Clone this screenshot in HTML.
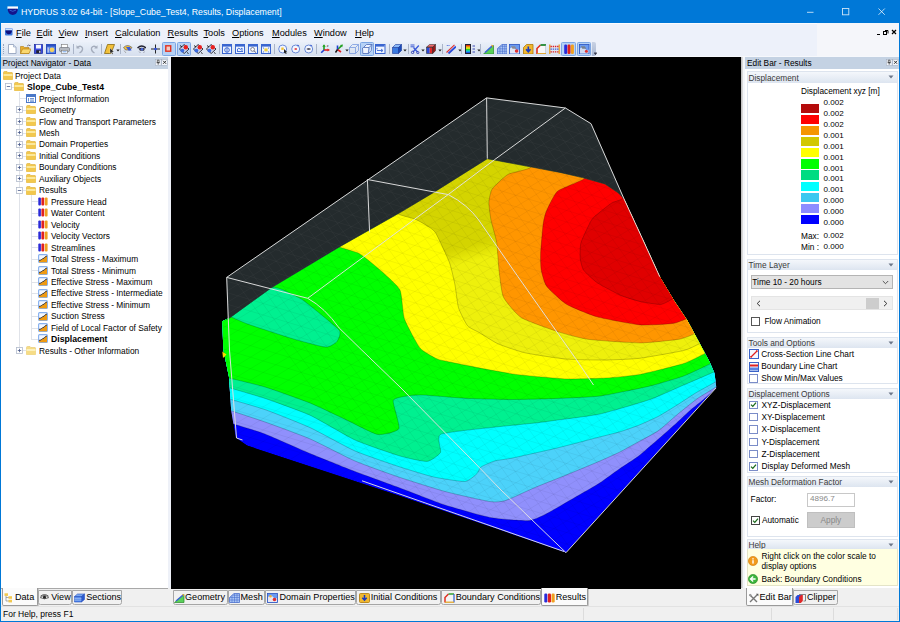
<!DOCTYPE html>
<html lang="en"><head><meta charset="utf-8"><title>HYDRUS 3.02 64-bit - [Slope_Cube_Test4, Results, Displacement]</title>
<style>

html,body{margin:0;padding:0}
body{width:900px;height:622px;position:relative;overflow:hidden;background:#f0f0f0;font-family:"Liberation Sans", sans-serif;font-size:9px;color:#000;}
div,span{box-sizing:border-box}
.abs{position:absolute}
.t{position:absolute;white-space:nowrap;line-height:12px;height:12px}
#title{left:0;top:0;width:900px;height:23px;background:#0078d7}
#menubar{left:1px;top:23px;width:898px;height:34px;background:#edf1fa;border-top:1px solid #fbfcff}
#toolbar{left:1px;top:41.5px;width:591px;height:14.5px;background:linear-gradient(#eaf0f9,#d6dfee)}
.mi{position:absolute;top:27px;font-size:9.2px;line-height:12px;white-space:nowrap;color:#000}
.mi u{text-decoration-thickness:1px;text-underline-offset:1px}
.hdr{position:absolute;height:11.5px;background:#c4d2e3;font-size:8.3px;line-height:12px;white-space:nowrap;color:#000}
  .tree{position:absolute;font-size:8.35px;line-height:12px;white-space:nowrap;height:12px}
.grp{position:absolute;left:747px;width:151px;height:12px;background:linear-gradient(#f4f7fb,#dde5f0);font-size:8.3px;color:#3a3a3a;white-space:nowrap;border:1px solid #dde4ee;border-bottom:none}
.rt{position:absolute;font-size:8.3px;line-height:12px;white-space:nowrap;height:12px}
.cb{position:absolute;width:9px;height:9px;background:#fff;border:1px solid #6a7da0}
.tab{position:absolute;font-size:9.1px;line-height:12px;white-space:nowrap;height:12px}

</style></head><body>
<div id="title" class="abs"></div>
<svg class="abs" style="left:6.5px;top:6px" width="11.5" height="9.8" viewBox="0 0 14 12"><rect x="0.5" y="0.5" width="13" height="3" fill="#fff"/><path d="M1 3.5 h12 v2 q-1 5 -6 5.5 q-5 -0.5 -6 -5.5z" fill="#14148c"/><path d="M3 5 q4 3 8 0" stroke="#3c6edc" stroke-width="1" fill="none"/></svg>
<div class="t" style="left:21px;top:6px;color:#fff;font-size:8.8px">HYDRUS 3.02 64-bit - [Slope_Cube_Test4, Results, Displacement]</div>
<svg class="abs" style="left:800px;top:0" width="100" height="23" viewBox="0 0 100 23"><g stroke="#fff" stroke-opacity="0.8" stroke-width="0.9" fill="none"><path d="M7 12.3h6.5"/><rect x="42.5" y="8.5" width="6.3" height="6.3"/><path d="M78.5 8.5l6.3 6.3m0 -6.3l-6.3 6.3"/></g></svg>
<div id="menubar" class="abs"></div>
<div class="abs" style="left:817px;top:23px;width:82px;height:34px;background:#f5f6fa"></div>
<svg class="abs" style="left:5px;top:28px" width="7.5" height="7.5" viewBox="0 0 11 10" preserveAspectRatio="none"><rect x="0" y="0" width="11" height="10" rx="1.5" fill="#3c78dc"/><rect x="0.5" y="0.5" width="10" height="2.5" fill="#cfe0fa"/><path d="M1 3.2h9v2q-1.5 3-4.5 3.2q-3-0.2-4.5-3.2z" fill="#10107c"/></svg>
<div class="mi" style="left:16px"><u>F</u>ile</div>
<div class="mi" style="left:36.5px"><u>E</u>dit</div>
<div class="mi" style="left:58.5px"><u>V</u>iew</div>
<div class="mi" style="left:85px"><u>I</u>nsert</div>
<div class="mi" style="left:115px"><u>C</u>alculation</div>
<div class="mi" style="left:167.5px"><u>R</u>esults</div>
<div class="mi" style="left:203.5px"><u>T</u>ools</div>
<div class="mi" style="left:232px"><u>O</u>ptions</div>
<div class="mi" style="left:272px"><u>M</u>odules</div>
<div class="mi" style="left:314px"><u>W</u>indow</div>
<div class="mi" style="left:355px"><u>H</u>elp</div>
<svg class="abs" style="left:876px;top:28px" width="22" height="8" viewBox="0 0 22 8"><path d="M1 6.5h3" stroke="#000" stroke-width="1"/><rect x="7.5" y="3.5" width="3" height="3" fill="none" stroke="#000" stroke-width="1"/><path d="M9 2.5h3v3" fill="none" stroke="#000" stroke-width="1"/><path d="M16 2l4 4m0-4l-4 4" stroke="#000" stroke-width="1.2"/></svg>
<div id="toolbar" class="abs"></div>
<div class="abs" style="left:3px;top:44px;width:1px;height:10px;border-left:1px dotted #98a4bc"></div>
<svg class="abs" style="left:8px;top:43.5px" width="8.5" height="10" viewBox="0 0 8.5 10"><path d="M0.5 0.5h5l2.5 2.5v6.5h-7.5z" fill="#fff" stroke="#8a9ab8" stroke-width="0.8"/><path d="M5.5 0.5v2.5h2.5" fill="#dde6f4" stroke="#8a9ab8" stroke-width="0.6"/></svg>
<svg class="abs" style="left:19.5px;top:43.5px" width="11.5" height="10" viewBox="0 0 11.5 10"><path d="M0.5 2.5h3l1 1h4.5v6h-8.5z" fill="#e8b030" stroke="#b07a10" stroke-width="0.6"/><path d="M0.5 9.5l2-4.5h8.5l-2 4.5z" fill="#fad870" stroke="#b07a10" stroke-width="0.6"/><path d="M7 2.2q1.5-2 3-0.5l0.8-0.8" stroke="#446" stroke-width="0.7" fill="none"/></svg>
<svg class="abs" style="left:34px;top:43.5px" width="9" height="10" viewBox="0 0 9 10"><rect x="0.4" y="0.5" width="8.2" height="9" fill="#3a4ae0" stroke="#1a2a9a" stroke-width="0.7"/><rect x="2" y="0.8" width="5" height="3.7" fill="#f4f6ff"/><rect x="2.2" y="6.2" width="4.6" height="3" fill="#223"/><rect x="5.2" y="6.8" width="1.2" height="2" fill="#eef"/></svg>
<svg class="abs" style="left:45.8px;top:43.5px" width="10" height="10" viewBox="0 0 10 10"><rect x="0.5" y="0.5" width="9" height="9" fill="#5a86e8" stroke="#2a4ec0" stroke-width="1"/><rect x="1" y="1" width="8" height="1.6" fill="#2a4ec0"/><circle cx="6" cy="5.8" r="2.4" fill="#f4d060"/><path d="M2.2 3.5v5" stroke="#dde" stroke-width="1"/></svg>
<svg class="abs" style="left:59px;top:43.5px" width="11" height="10" viewBox="0 0 11 10"><rect x="2.5" y="0.5" width="6" height="3.5" fill="#fff" stroke="#777" stroke-width="0.6"/><rect x="0.5" y="3.5" width="10" height="4" rx="1" fill="#b4b8c0" stroke="#6a6e78" stroke-width="0.6"/><rect x="2.5" y="6.3" width="6" height="3.2" fill="#fff" stroke="#777" stroke-width="0.6"/><path d="M3.5 7.8h4" stroke="#4a8ae0" stroke-width="0.8"/></svg>
<div class="abs" style="left:72.5px;top:44px;width:1px;height:10px;background:#aab4c8"></div>
<svg class="abs" style="left:76px;top:43.5px" width="8" height="10" viewBox="0 0 8 10"><path d="M1.5 3.5Q5 0.8 6.5 4Q7 7 3.5 9" fill="none" stroke="#a4acbc" stroke-width="1.3"/><path d="M0.5 1.2v3.3h3.3z" fill="#a4acbc"/></svg>
<svg class="abs" style="left:89.5px;top:43.5px" width="8" height="10" viewBox="0 0 8 10"><path d="M6.5 3.5Q3 0.8 1.5 4Q1 7 4.5 9" fill="none" stroke="#a4acbc" stroke-width="1.3"/><path d="M7.5 1.2v3.3h-3.3z" fill="#a4acbc"/></svg>
<div class="abs" style="left:101px;top:44px;width:1px;height:10px;background:#aab4c8"></div>
<svg class="abs" style="left:104px;top:43.5px" width="11" height="11" viewBox="0 0 11 11"><path d="M3.5 0.5h7l-3.5 9h-6.5z" fill="#f2c038" stroke="#8a6a10" stroke-width="0.8"/><path d="M6 4v5.5l1.3-1.2l1 2l0.9-0.4l-1-2h1.8z" fill="#222" stroke="#fff" stroke-width="0.3"/></svg>
<svg class="abs" style="left:116px;top:48.5px" width="4" height="3" viewBox="0 0 4 3"><path d="M0.3 0.5h3.4l-1.7 2z" fill="#222"/></svg>
<div class="abs" style="left:119.7px;top:44px;width:1px;height:10px;background:#aab4c8"></div>
<svg class="abs" style="left:123px;top:43.5px" width="9.5" height="10" viewBox="0 0 9.5 10"><path d="M0.5 3.5Q4.5 -0.5 9 3.5L7 6H2.5z" fill="#f0c040" stroke="#555" stroke-width="0.6"/><path d="M3 3h4l1.5 3.5h-3z" fill="#3a5ad8"/><path d="M1 6.5l2 2.5" stroke="#999" stroke-width="0.8"/></svg>
<svg class="abs" style="left:136.5px;top:43.5px" width="9.5" height="10" viewBox="0 0 9.5 10"><path d="M0.5 4Q4.7 0 9 4" fill="none" stroke="#223" stroke-width="1.4"/><path d="M1.5 4.5Q4.7 2.8 8 4.5L7 6.8H3z" fill="#334"/><circle cx="5" cy="5.2" r="1.3" fill="#4a6ae0"/><path d="M2 7.5l1.5 1.5M7.5 7.5l-1 1.5" stroke="#889" stroke-width="0.7"/></svg>
<svg class="abs" style="left:150.5px;top:43.5px" width="9" height="10" viewBox="0 0 9 10"><path d="M0 5h9M4.5 0.5v9" stroke="#111" stroke-width="0.9"/><circle cx="4.5" cy="5" r="1.3" fill="#2a4ae0"/></svg>
<div class="abs" style="left:161.5px;top:42px;width:14px;height:13.5px;background:#b6d2f6;border:1px solid #7ca6e4;border-radius:1.5px"></div>
<svg class="abs" style="left:165px;top:45.3px" width="6.5" height="7" viewBox="0 0 6.5 7"><rect x="0.8" y="0.8" width="4.9" height="5.4" fill="#f4c8c0" stroke="#e03020" stroke-width="1.4"/></svg>
<div class="abs" style="left:177px;top:42px;width:14px;height:13.5px;background:#b6d2f6;border:1px solid #7ca6e4;border-radius:1.5px"></div>
<svg class="abs" style="left:179px;top:43.5px" width="10.5" height="10" viewBox="0 0 10.5 10"><path d="M5.2 0.5l4.8 4.5l-4.8 4.5l-4.8-4.5z" fill="#c8d4ea" stroke="#223" stroke-width="0.9"/><circle cx="6.8" cy="3.3" r="2.2" fill="#e82020"/><circle cx="3.4" cy="6.6" r="1.9" fill="#3a6ae0"/><path d="M1 1.5l2 1.5M8 8.5l1.5 1" stroke="#111" stroke-width="0.9"/></svg>
<svg class="abs" style="left:192.5px;top:43.5px" width="10.5" height="10" viewBox="0 0 10.5 10"><path d="M5.2 0.5l4.8 4.5l-4.8 4.5l-4.8-4.5z" fill="#c8d4ea" stroke="#223" stroke-width="0.9"/><circle cx="6.8" cy="3.3" r="2.2" fill="#e82020"/><circle cx="3.4" cy="6.6" r="1.9" fill="#3a6ae0"/><path d="M1 1.5l2 1.5M8 8.5l1.5 1" stroke="#111" stroke-width="0.9"/></svg>
<svg class="abs" style="left:206px;top:43.5px" width="10.5" height="10" viewBox="0 0 10.5 10"><path d="M5.2 0.5l4.8 4.5l-4.8 4.5l-4.8-4.5z" fill="#c8d4ea" stroke="#223" stroke-width="0.9"/><circle cx="6.8" cy="3.3" r="2.2" fill="#e82020"/><circle cx="3.4" cy="6.6" r="1.9" fill="#3a6ae0"/><path d="M1 1.5l2 1.5M8 8.5l1.5 1" stroke="#111" stroke-width="0.9"/></svg>
<div class="abs" style="left:218.5px;top:44px;width:1px;height:10px;background:#aab4c8"></div>
<svg class="abs" style="left:221.7px;top:43.5px" width="10" height="10" viewBox="0 0 10 10"><rect x="0.5" y="0.5" width="9" height="9" fill="#eef4ff" stroke="#3a66d0" stroke-width="1"/><rect x="1" y="1" width="8" height="1.6" fill="#3a66d0"/><circle cx="5" cy="6" r="2.3" fill="none" stroke="#3a66d0" stroke-width="1"/><path d="M5 4v4" stroke="#3a66d0" stroke-width="0.9"/></svg>
<svg class="abs" style="left:234.7px;top:43.5px" width="10" height="10" viewBox="0 0 10 10"><rect x="0.5" y="0.5" width="9" height="9" fill="#eef4ff" stroke="#3a66d0" stroke-width="1"/><rect x="1" y="1" width="8" height="1.6" fill="#3a66d0"/><path d="M2 7.5h6M2.5 7V5l1.5-1l1.2 1.5L7 4v3" stroke="#3a66d0" stroke-width="0.9" fill="none"/></svg>
<svg class="abs" style="left:248px;top:43.5px" width="10" height="10" viewBox="0 0 10 10"><rect x="0.5" y="0.5" width="9" height="9" fill="#eef4ff" stroke="#3a66d0" stroke-width="1"/><rect x="1" y="1" width="8" height="1.6" fill="#3a66d0"/><circle cx="4.6" cy="5.4" r="1.9" fill="#fff" stroke="#667" stroke-width="0.8"/><path d="M6 6.8l2.2 2" stroke="#667" stroke-width="1"/></svg>
<svg class="abs" style="left:261px;top:43.5px" width="10" height="10" viewBox="0 0 10 10"><rect x="0.5" y="0.5" width="9" height="9" fill="#eef4ff" stroke="#3a66d0" stroke-width="1"/><rect x="1" y="1" width="8" height="1.6" fill="#3a66d0"/><rect x="3.4" y="4.4" width="3.2" height="3" fill="#f0d040"/><path d="M1.8 3.5l1.2 1M8.2 3.5l-1.2 1M1.8 8.5l1.2-1M8.2 8.5l-1.2-1" stroke="#3a66d0" stroke-width="0.9"/></svg>
<div class="abs" style="left:274px;top:44px;width:1px;height:10px;background:#aab4c8"></div>
<svg class="abs" style="left:277.5px;top:43.5px" width="10.5" height="10.5" viewBox="0 0 10.5 10.5"><circle cx="4.7" cy="5" r="4" fill="#f4f7ff" stroke="#6a8ad8" stroke-width="1"/><rect x="3.3" y="3.5" width="2.4" height="2.4" fill="#f0c030"/><path d="M6 5v4.5l1-0.9l0.8 1.6l0.8-0.4l-0.8-1.5h1.5z" fill="#222"/></svg>
<svg class="abs" style="left:291px;top:43.5px" width="9.5" height="10" viewBox="0 0 9.5 10"><circle cx="4.7" cy="5" r="4" fill="#f4f7ff" stroke="#6a8ad8" stroke-width="1"/><path d="M3.7 4l2 2m0-2l-2 2" stroke="#e02020" stroke-width="0.9"/><path d="M6.5 0.5l1.8 1l-1.8 1z" fill="#3a5ad0"/></svg>
<svg class="abs" style="left:304px;top:43.5px" width="9.5" height="10" viewBox="0 0 9.5 10"><circle cx="4.7" cy="5" r="4" fill="#f4f7ff" stroke="#6a8ad8" stroke-width="1"/><path d="M2.3 5Q4.7 3 7.1 5Q4.7 6.8 2.3 5z" fill="#556"/><path d="M6.5 0.5l1.8 1l-1.8 1z" fill="#3a5ad0"/></svg>
<div class="abs" style="left:316.3px;top:44px;width:1px;height:10px;background:#aab4c8"></div>
<svg class="abs" style="left:319.7px;top:43.5px" width="10" height="10" viewBox="0 0 10 10"><path d="M4 6V1.2" stroke="#20a020" stroke-width="1.6"/><path d="M2.3 2.8L4 0.3l1.7 2.5z" fill="#20a020"/><path d="M4 6h4.5" stroke="#e02020" stroke-width="1.6"/><path d="M7.5 4.4L10 6L7.5 7.6z" fill="#e02020"/><path d="M4 6L1.2 8.8" stroke="#2040d0" stroke-width="1.6"/><text x="6.8" y="3.2" font-size="3.5" font-family="Liberation Sans, sans-serif" fill="#111">z</text></svg>
<svg class="abs" style="left:333.7px;top:43.5px" width="9.5" height="10" viewBox="0 0 9.5 10"><path d="M3.5 5.5L7.5 1.8" stroke="#20a020" stroke-width="1.6"/><path d="M6 1l3-0.5l-0.8 2.8z" fill="#20a020"/><path d="M3.5 5.5L7 8" stroke="#e02020" stroke-width="1.6"/><path d="M3.5 5.5V1.5" stroke="#2040d0" stroke-width="1.6"/><path d="M3.5 5.5L1.5 8.5" stroke="#111" stroke-width="1.4"/></svg>
<svg class="abs" style="left:344.5px;top:48.5px" width="4" height="3" viewBox="0 0 4 3"><path d="M0.3 0.5h3.4l-1.7 2z" fill="#222"/></svg>
<svg class="abs" style="left:349px;top:43.5px" width="10" height="10" viewBox="0 0 10 10"><path d="M0.5 3.5h6v6h-6zM0.5 3.5l3-3h6l-3 3M9.5 0.5v6l-3 3" fill="none" stroke="#7a9ae0" stroke-width="0.8"/></svg>
<div class="abs" style="left:360px;top:42px;width:14px;height:13.5px;background:#b6d2f6;border:1px solid #7ca6e4;border-radius:1.5px"></div>
<svg class="abs" style="left:362.2px;top:43.5px" width="10.5" height="10.5" viewBox="0 0 10.5 10.5"><path d="M0.5 4l1-0.5h5.5l-0.7 6h-5.5zM1.5 3.5l3-3h5.5l-3 3M10 0.5l-0.8 6l-3 3.3" fill="#eef4ff" stroke="#4a6ab8" stroke-width="0.8"/></svg>
<svg class="abs" style="left:375.3px;top:43.5px" width="10.5" height="10" viewBox="0 0 10.5 10"><rect x="0.5" y="0.5" width="9.5" height="9" fill="#eef4ff" stroke="#3a66d0" stroke-width="1"/><rect x="1" y="1" width="8.5" height="1.6" fill="#3a66d0"/><path d="M2 4v1.5M2 6.5h5.5M6 5l2 1.5l-2 1.5" stroke="#3a66d0" stroke-width="0.9" fill="none"/></svg>
<div class="abs" style="left:388.7px;top:44px;width:1px;height:10px;background:#aab4c8"></div>
<svg class="abs" style="left:391.7px;top:43.5px" width="10" height="10" viewBox="0 0 10 10"><path d="M0.5 3.5h6v6h-6z" fill="#3a7ae0" stroke="#1a3a9a" stroke-width="0.6"/><path d="M0.5 3.5l3-3h6l-3 3z" fill="#8ab8f8" stroke="#1a3a9a" stroke-width="0.6"/><path d="M9.5 0.5v6l-3 3v-6z" fill="#1a4ab8" stroke="#1a3a9a" stroke-width="0.6"/></svg>
<svg class="abs" style="left:402.5px;top:48.5px" width="4" height="3" viewBox="0 0 4 3"><path d="M0.3 0.5h3.4l-1.7 2z" fill="#222"/></svg>
<div class="abs" style="left:407.5px;top:44px;width:1px;height:10px;background:#aab4c8"></div>
<svg class="abs" style="left:410px;top:43.5px" width="9.5" height="10.5" viewBox="0 0 9.5 10.5"><path d="M0.5 1h4M0.5 2.8h4" stroke="#2a4ad0" stroke-width="0.9"/><path d="M8.8 1.5L3 8M3.5 3.5L7.5 8" stroke="#3a5ad8" stroke-width="1.3"/><circle cx="2.6" cy="8.4" r="1.2" fill="none" stroke="#2a3ab0" stroke-width="0.9"/><circle cx="7.8" cy="8.6" r="1.1" fill="none" stroke="#2a3ab0" stroke-width="0.9"/></svg>
<svg class="abs" style="left:421.3px;top:48.5px" width="4" height="3" viewBox="0 0 4 3"><path d="M0.3 0.5h3.4l-1.7 2z" fill="#222"/></svg>
<svg class="abs" style="left:425.8px;top:43.5px" width="10" height="10" viewBox="0 0 10 10"><path d="M0.5 3.2h3.2v6.3h-3.2z" fill="#2a4ad8"/><path d="M3.7 3.2h3v6.3h-3z" fill="#e02828"/><path d="M0.5 3.2l3-2.7h6l-2.8 2.7z" fill="#f06a6a" stroke="#222" stroke-width="0.5"/><path d="M9.5 0.5v6.2l-2.8 2.8v-6.3z" fill="#a01818" stroke="#222" stroke-width="0.5"/><path d="M0.5 3.2h6.2v6.3h-6.2z" fill="none" stroke="#222" stroke-width="0.5"/></svg>
<svg class="abs" style="left:437.5px;top:48.5px" width="4" height="3" viewBox="0 0 4 3"><path d="M0.3 0.5h3.4l-1.7 2z" fill="#222"/></svg>
<div class="abs" style="left:441.7px;top:44px;width:1px;height:10px;background:#aab4c8"></div>
<svg class="abs" style="left:445.5px;top:43.5px" width="10.5" height="10" viewBox="0 0 10.5 10"><path d="M0.5 8.5L8.5 0.8" stroke="#e03030" stroke-width="1.1"/><path d="M2.5 9.5L10 2.5" stroke="#2a4ad8" stroke-width="1.8"/><path d="M0.8 1.5h3" stroke="#2a4ad8" stroke-width="0.8" stroke-dasharray="1 0.7"/></svg>
<svg class="abs" style="left:457.7px;top:48.5px" width="4" height="3" viewBox="0 0 4 3"><path d="M0.3 0.5h3.4l-1.7 2z" fill="#222"/></svg>
<div class="abs" style="left:461.3px;top:44px;width:1px;height:10px;background:#aab4c8"></div>
<div class="abs" style="left:465px;top:43.5px;width:5.8px;height:10.5px;border:0.6px solid #223;background:linear-gradient(#e01010,#f0a010 22%,#f0f010 40%,#20d020 58%,#10d0e0 75%,#2030e0)"></div>
<svg class="abs" style="left:472px;top:43.5px" width="4" height="10" viewBox="0 0 4 10"><path d="M0.5 2h2.5M0.5 5h2.5M0.5 8h2.5" stroke="#2a3ab0" stroke-width="0.9"/></svg>
<svg class="abs" style="left:476.8px;top:48.5px" width="4" height="3" viewBox="0 0 4 3"><path d="M0.3 0.5h3.4l-1.7 2z" fill="#222"/></svg>
<div class="abs" style="left:480.3px;top:44px;width:1px;height:10px;background:#aab4c8"></div>
<svg class="abs" style="left:483px;top:43.5px" width="11" height="10.5" viewBox="0 0 11 10.5"><path d="M0.5 10L10.5 10L10.5 1.5z" fill="#58d058" stroke="#2a8a2a" stroke-width="0.7"/><path d="M2 8.5L9 2" stroke="#3a62d8" stroke-width="1.4"/><path d="M8 0.8l2.2 0.4l-0.6 2.2z" fill="#e8a020"/></svg>
<svg class="abs" style="left:496.5px;top:43.5px" width="10.5" height="10.5" viewBox="0 0 10.5 10.5"><path d="M0.5 10V4.5L5 0.5H10V10z" fill="#a8c4f4" stroke="#3a62c8" stroke-width="0.7"/><path d="M3 2.5V10M5.5 0.8V10M7.8 0.8V10M0.8 4.8H10M0.8 7.3H10M3.5 2.3H10" stroke="#3a62c8" stroke-width="0.5"/></svg>
<svg class="abs" style="left:509.3px;top:43.5px" width="11" height="10.5" viewBox="0 0 11 10.5"><rect x="0.5" y="0.5" width="10" height="9.5" fill="#6a9af0" stroke="#2a52c0" stroke-width="0.8"/><path d="M1 4.5Q4 1.5 6 4.5T10 5.5V9.5H1z" fill="#dfe6f6"/><circle cx="7.6" cy="7" r="1.8" fill="#e03030"/><path d="M2 2.2h4l1.5 2.5h-4z" fill="#8a8a94"/></svg>
<svg class="abs" style="left:523px;top:43.5px" width="10.5" height="10.5" viewBox="0 0 10.5 10.5"><path d="M0.5 10V3.5L3.5 0.5H10V10z" fill="#f0b830" stroke="#b07808" stroke-width="0.8"/><path d="M5.3 2.5v4.5M3.1 5.2L5.3 7.8L7.5 5.2" stroke="#1a3ac0" stroke-width="1.6" fill="none"/></svg>
<svg class="abs" style="left:535.8px;top:43.5px" width="10.5" height="10.5" viewBox="0 0 10.5 10.5"><path d="M1 10V4.5L4.5 1H10V10z" fill="#f8f8f8"/><path d="M1 10V4.5L4.5 1" stroke="#e03020" stroke-width="1.6" fill="none"/><path d="M4.5 1H10" stroke="#208a30" stroke-width="1.8"/><path d="M10 1V10" stroke="#8a94a8" stroke-width="0.8"/><path d="M1 9.7H10" stroke="#e0a020" stroke-width="1.2"/></svg>
<svg class="abs" style="left:548.6px;top:43.5px" width="11" height="10.5" viewBox="0 0 11 10.5"><path d="M0.8 0.5v9.5M10.2 0.5v9.5" stroke="#e8a020" stroke-width="1.3"/><path d="M1.5 2.5h8M1.5 7.8h8" stroke="#e02020" stroke-width="1.3" stroke-dasharray="1.4 0.8"/><path d="M1.5 5.2h8" stroke="#3a5ad8" stroke-width="1.3" stroke-dasharray="1.4 0.8"/></svg>
<div class="abs" style="left:561px;top:42px;width:14.5px;height:13.5px;background:#b6d2f6;border:1px solid #7ca6e4;border-radius:1.5px"></div>
<svg class="abs" style="left:563.5px;top:43.5px" width="10" height="10.5" viewBox="0 0 10 10.5"><rect x="0.2" y="0.5" width="2.9" height="9.5" rx="1.2" fill="#2a2ad8"/><rect x="3.5" y="0.5" width="3" height="9.5" rx="1.2" fill="#e02020"/><rect x="6.9" y="0.5" width="3" height="9.5" rx="1.2" fill="#f0a020"/></svg>
<div class="abs" style="left:577px;top:42px;width:14px;height:13.5px;background:#b6d2f6;border:1px solid #7ca6e4;border-radius:1.5px"></div>
<svg class="abs" style="left:579px;top:43.5px" width="10.5" height="10.5" viewBox="0 0 10.5 10.5"><rect x="0.5" y="0.5" width="9.5" height="9.5" fill="#6a9af0" stroke="#2a52c0" stroke-width="0.8"/><path d="M1 4.5Q4 1.5 6 4.5T9.5 5.5V9.5H1z" fill="#cfdaf2"/><circle cx="7.4" cy="7.2" r="1.5" fill="#e03030"/><path d="M1.8 2.2h4l1.5 2.5h-4z" fill="#77808e"/></svg>
<div class="abs" style="left:592px;top:42px;width:4px;height:14px;background:linear-gradient(#c8d2e4,#a8b6d0);border-radius:0 2px 2px 0"></div>
<svg class="abs" style="left:593.5px;top:52px" width="3" height="3" viewBox="0 0 3 3"><path d="M0 0.3h3M0.2 1.2h2.6l-1.3 1.5z" fill="#223" stroke="#223" stroke-width="0.4"/></svg>
<div class="abs" style="left:1px;top:56px;width:898px;height:1px;background:#f6f8fc"></div>
<div class="abs" style="left:1px;top:57px;width:171px;height:531px;background:#eef1f8"></div>
<div class="hdr" style="left:1px;top:57px;width:167px;padding-left:1.5px">Project Navigator - Data</div>
<div class="abs" style="left:1px;top:68.5px;width:167px;height:520.5px;background:#fff;border-bottom:1px solid #b8b8b8"></div>
<svg class="abs" style="left:155px;top:58.8px" width="13" height="7" viewBox="0 0 13 7"><rect x="0.3" y="0.3" width="5.8" height="6.2" fill="#f2f5fa" stroke="#9aa6ba" stroke-width="0.5"/><rect x="6.7" y="0.3" width="5.8" height="6.2" fill="#f2f5fa" stroke="#9aa6ba" stroke-width="0.5"/><path d="M2.3 1.2h1.8v2.4h-1.8zM1.6 3.7h3.2M3.2 3.7v2" stroke="#333" stroke-width="0.7" fill="none"/><path d="M8.1 1.8l3 3m0-3l-3 3" stroke="#222" stroke-width="0.9"/></svg>
<div class="abs" style="left:7px;top:86.86px;width:1px;height:1px;background:#b8bcc4;opacity:.0"></div>
<div class="abs" style="left:19px;top:91.86px;width:1px;height:258.58px;background:#e0e3e9"></div>
<div class="abs" style="left:31px;top:195px;width:1px;height:143.98px;background:#e0e3e9"></div>
<svg class="abs" style="left:2.5px;top:70.9px" width="10" height="9" viewBox="0 0 10 9"><path d="M0.5 1.5 q0-1 1-1 h2.5 l1 1 h4 q0.5 0 0.5 0.8 v6.2 h-9z" fill="#f2c84e" stroke="#d9a520" stroke-width="0.5"/><path d="M0.5 3 h9 v5.5 h-9z" fill="#f2c84e"/><path d="M0.5 3 h9 v2 h-9z" fill="#fdf0b0" opacity="0.8"/></svg>
<div class="tree" style="left:15px;top:69.7px">Project Data</div>
<div class="abs" style="left:9px;top:86.86px;width:5px;height:1px;background:#e0e3e9"></div>
<svg class="abs" style="left:4.5px;top:83.36px" width="7" height="7" viewBox="0 0 7 7"><rect x="0.5" y="0.5" width="6" height="6" fill="#fff" stroke="#b4bccc" stroke-width="0.8"/><path d="M1.8 3.5h3.4" stroke="#4a5a8a" stroke-width="0.8"/></svg>
<svg class="abs" style="left:14px;top:82.36px" width="10" height="9" viewBox="0 0 10 9"><path d="M0.5 1.5 q0-1 1-1 h2.5 l1 1 h4 q0.5 0 0.5 0.8 v6.2 h-9z" fill="#f2c84e" stroke="#d9a520" stroke-width="0.5"/><path d="M0.5 3 h9 v5.5 h-9z" fill="#f2c84e"/><path d="M0.5 3 h9 v2 h-9z" fill="#fdf0b0" opacity="0.8"/></svg>
<div class="tree" style="left:27px;top:81.16px;font-weight:bold;font-size:8.7px">Slope_Cube_Test4</div>
<div class="abs" style="left:19px;top:98.32px;width:7px;height:1px;background:#e0e3e9"></div>
<svg class="abs" style="left:26px;top:93.82px" width="10" height="9" viewBox="0 0 10 9"><rect x="0.5" y="0.5" width="9" height="8" fill="#fff" stroke="#4a78c8" stroke-width="1"/><rect x="1" y="1" width="8" height="2" fill="#4a78c8"/><path d="M2.5 4v3.5M4 4.5h4M4 6h4M4 7.3h4" stroke="#4a78c8" stroke-width="0.8"/></svg>
<div class="tree" style="left:39px;top:92.62px">Project Information</div>
<div class="abs" style="left:19px;top:109.78px;width:7px;height:1px;background:#e0e3e9"></div>
<svg class="abs" style="left:16px;top:106.28px" width="7" height="7" viewBox="0 0 7 7"><rect x="0.5" y="0.5" width="6" height="6" fill="#fff" stroke="#b4bccc" stroke-width="0.8"/><path d="M1.8 3.5h3.4" stroke="#4a5a8a" stroke-width="0.8"/><path d="M3.5 1.8v3.4" stroke="#4a5a8a" stroke-width="0.8"/></svg>
<svg class="abs" style="left:26px;top:105.28px" width="10" height="9" viewBox="0 0 10 9"><path d="M0.5 1.5 q0-1 1-1 h2.5 l1 1 h4 q0.5 0 0.5 0.8 v6.2 h-9z" fill="#f2c84e" stroke="#d9a520" stroke-width="0.5"/><path d="M0.5 3 h9 v5.5 h-9z" fill="#f2c84e"/><path d="M0.5 3 h9 v2 h-9z" fill="#fdf0b0" opacity="0.8"/></svg>
<div class="tree" style="left:39px;top:104.08px">Geometry</div>
<div class="abs" style="left:19px;top:121.24px;width:7px;height:1px;background:#e0e3e9"></div>
<svg class="abs" style="left:16px;top:117.74px" width="7" height="7" viewBox="0 0 7 7"><rect x="0.5" y="0.5" width="6" height="6" fill="#fff" stroke="#b4bccc" stroke-width="0.8"/><path d="M1.8 3.5h3.4" stroke="#4a5a8a" stroke-width="0.8"/><path d="M3.5 1.8v3.4" stroke="#4a5a8a" stroke-width="0.8"/></svg>
<svg class="abs" style="left:26px;top:116.74px" width="10" height="9" viewBox="0 0 10 9"><path d="M0.5 1.5 q0-1 1-1 h2.5 l1 1 h4 q0.5 0 0.5 0.8 v6.2 h-9z" fill="#f2c84e" stroke="#d9a520" stroke-width="0.5"/><path d="M0.5 3 h9 v5.5 h-9z" fill="#f2c84e"/><path d="M0.5 3 h9 v2 h-9z" fill="#fdf0b0" opacity="0.8"/></svg>
<div class="tree" style="left:39px;top:115.54px">Flow and Transport Parameters</div>
<div class="abs" style="left:19px;top:132.7px;width:7px;height:1px;background:#e0e3e9"></div>
<svg class="abs" style="left:16px;top:129.2px" width="7" height="7" viewBox="0 0 7 7"><rect x="0.5" y="0.5" width="6" height="6" fill="#fff" stroke="#b4bccc" stroke-width="0.8"/><path d="M1.8 3.5h3.4" stroke="#4a5a8a" stroke-width="0.8"/><path d="M3.5 1.8v3.4" stroke="#4a5a8a" stroke-width="0.8"/></svg>
<svg class="abs" style="left:26px;top:128.2px" width="10" height="9" viewBox="0 0 10 9"><path d="M0.5 1.5 q0-1 1-1 h2.5 l1 1 h4 q0.5 0 0.5 0.8 v6.2 h-9z" fill="#f2c84e" stroke="#d9a520" stroke-width="0.5"/><path d="M0.5 3 h9 v5.5 h-9z" fill="#f2c84e"/><path d="M0.5 3 h9 v2 h-9z" fill="#fdf0b0" opacity="0.8"/></svg>
<div class="tree" style="left:39px;top:127px">Mesh</div>
<div class="abs" style="left:19px;top:144.16px;width:7px;height:1px;background:#e0e3e9"></div>
<svg class="abs" style="left:16px;top:140.66px" width="7" height="7" viewBox="0 0 7 7"><rect x="0.5" y="0.5" width="6" height="6" fill="#fff" stroke="#b4bccc" stroke-width="0.8"/><path d="M1.8 3.5h3.4" stroke="#4a5a8a" stroke-width="0.8"/><path d="M3.5 1.8v3.4" stroke="#4a5a8a" stroke-width="0.8"/></svg>
<svg class="abs" style="left:26px;top:139.66px" width="10" height="9" viewBox="0 0 10 9"><path d="M0.5 1.5 q0-1 1-1 h2.5 l1 1 h4 q0.5 0 0.5 0.8 v6.2 h-9z" fill="#f2c84e" stroke="#d9a520" stroke-width="0.5"/><path d="M0.5 3 h9 v5.5 h-9z" fill="#f2c84e"/><path d="M0.5 3 h9 v2 h-9z" fill="#fdf0b0" opacity="0.8"/></svg>
<div class="tree" style="left:39px;top:138.46px">Domain Properties</div>
<div class="abs" style="left:19px;top:155.62px;width:7px;height:1px;background:#e0e3e9"></div>
<svg class="abs" style="left:16px;top:152.12px" width="7" height="7" viewBox="0 0 7 7"><rect x="0.5" y="0.5" width="6" height="6" fill="#fff" stroke="#b4bccc" stroke-width="0.8"/><path d="M1.8 3.5h3.4" stroke="#4a5a8a" stroke-width="0.8"/><path d="M3.5 1.8v3.4" stroke="#4a5a8a" stroke-width="0.8"/></svg>
<svg class="abs" style="left:26px;top:151.12px" width="10" height="9" viewBox="0 0 10 9"><path d="M0.5 1.5 q0-1 1-1 h2.5 l1 1 h4 q0.5 0 0.5 0.8 v6.2 h-9z" fill="#f2c84e" stroke="#d9a520" stroke-width="0.5"/><path d="M0.5 3 h9 v5.5 h-9z" fill="#f2c84e"/><path d="M0.5 3 h9 v2 h-9z" fill="#fdf0b0" opacity="0.8"/></svg>
<div class="tree" style="left:39px;top:149.92px">Initial Conditions</div>
<div class="abs" style="left:19px;top:167.08px;width:7px;height:1px;background:#e0e3e9"></div>
<svg class="abs" style="left:16px;top:163.58px" width="7" height="7" viewBox="0 0 7 7"><rect x="0.5" y="0.5" width="6" height="6" fill="#fff" stroke="#b4bccc" stroke-width="0.8"/><path d="M1.8 3.5h3.4" stroke="#4a5a8a" stroke-width="0.8"/><path d="M3.5 1.8v3.4" stroke="#4a5a8a" stroke-width="0.8"/></svg>
<svg class="abs" style="left:26px;top:162.58px" width="10" height="9" viewBox="0 0 10 9"><path d="M0.5 1.5 q0-1 1-1 h2.5 l1 1 h4 q0.5 0 0.5 0.8 v6.2 h-9z" fill="#f2c84e" stroke="#d9a520" stroke-width="0.5"/><path d="M0.5 3 h9 v5.5 h-9z" fill="#f2c84e"/><path d="M0.5 3 h9 v2 h-9z" fill="#fdf0b0" opacity="0.8"/></svg>
<div class="tree" style="left:39px;top:161.38px">Boundary Conditions</div>
<div class="abs" style="left:19px;top:178.54px;width:7px;height:1px;background:#e0e3e9"></div>
<svg class="abs" style="left:16px;top:175.04px" width="7" height="7" viewBox="0 0 7 7"><rect x="0.5" y="0.5" width="6" height="6" fill="#fff" stroke="#b4bccc" stroke-width="0.8"/><path d="M1.8 3.5h3.4" stroke="#4a5a8a" stroke-width="0.8"/><path d="M3.5 1.8v3.4" stroke="#4a5a8a" stroke-width="0.8"/></svg>
<svg class="abs" style="left:26px;top:174.04px" width="10" height="9" viewBox="0 0 10 9"><path d="M0.5 1.5 q0-1 1-1 h2.5 l1 1 h4 q0.5 0 0.5 0.8 v6.2 h-9z" fill="#f2c84e" stroke="#d9a520" stroke-width="0.5"/><path d="M0.5 3 h9 v5.5 h-9z" fill="#f2c84e"/><path d="M0.5 3 h9 v2 h-9z" fill="#fdf0b0" opacity="0.8"/></svg>
<div class="tree" style="left:39px;top:172.84px">Auxiliary Objects</div>
<div class="abs" style="left:19px;top:190px;width:7px;height:1px;background:#e0e3e9"></div>
<svg class="abs" style="left:16px;top:186.5px" width="7" height="7" viewBox="0 0 7 7"><rect x="0.5" y="0.5" width="6" height="6" fill="#fff" stroke="#b4bccc" stroke-width="0.8"/><path d="M1.8 3.5h3.4" stroke="#4a5a8a" stroke-width="0.8"/></svg>
<svg class="abs" style="left:26px;top:185.5px" width="10" height="9" viewBox="0 0 10 9"><path d="M0.5 1.5 q0-1 1-1 h2.5 l1 1 h4 q0.5 0 0.5 0.8 v6.2 h-9z" fill="#f2c84e" stroke="#d9a520" stroke-width="0.5"/><path d="M0.5 3 h9 v5.5 h-9z" fill="#f2c84e"/><path d="M0.5 3 h9 v2 h-9z" fill="#fdf0b0" opacity="0.8"/></svg>
<div class="tree" style="left:39px;top:184.3px">Results</div>
<div class="abs" style="left:31px;top:201.46px;width:7px;height:1px;background:#e0e3e9"></div>
<svg class="abs" style="left:38px;top:196.96px" width="10" height="9" viewBox="0 0 10 9"><rect x="0.3" y="0.5" width="2.6" height="8" rx="1" fill="#2a2ad8"/><rect x="3.4" y="0.5" width="2.8" height="8" rx="1" fill="#e02020"/><rect x="6.8" y="0.5" width="2.8" height="8" rx="1" fill="#f0a020"/></svg>
<div class="tree" style="left:51px;top:195.76px">Pressure Head</div>
<div class="abs" style="left:31px;top:212.92px;width:7px;height:1px;background:#e0e3e9"></div>
<svg class="abs" style="left:38px;top:208.42px" width="10" height="9" viewBox="0 0 10 9"><rect x="0.3" y="0.5" width="2.6" height="8" rx="1" fill="#2a2ad8"/><rect x="3.4" y="0.5" width="2.8" height="8" rx="1" fill="#e02020"/><rect x="6.8" y="0.5" width="2.8" height="8" rx="1" fill="#f0a020"/></svg>
<div class="tree" style="left:51px;top:207.22px">Water Content</div>
<div class="abs" style="left:31px;top:224.38px;width:7px;height:1px;background:#e0e3e9"></div>
<svg class="abs" style="left:38px;top:219.88px" width="10" height="9" viewBox="0 0 10 9"><rect x="0.3" y="0.5" width="2.6" height="8" rx="1" fill="#2a2ad8"/><rect x="3.4" y="0.5" width="2.8" height="8" rx="1" fill="#e02020"/><rect x="6.8" y="0.5" width="2.8" height="8" rx="1" fill="#f0a020"/></svg>
<div class="tree" style="left:51px;top:218.68px">Velocity</div>
<div class="abs" style="left:31px;top:235.84px;width:7px;height:1px;background:#e0e3e9"></div>
<svg class="abs" style="left:38px;top:231.34px" width="10" height="9" viewBox="0 0 10 9"><rect x="0.3" y="0.5" width="2.6" height="8" rx="1" fill="#2a2ad8"/><rect x="3.4" y="0.5" width="2.8" height="8" rx="1" fill="#e02020"/><rect x="6.8" y="0.5" width="2.8" height="8" rx="1" fill="#f0a020"/></svg>
<div class="tree" style="left:51px;top:230.14px">Velocity Vectors</div>
<div class="abs" style="left:31px;top:247.3px;width:7px;height:1px;background:#e0e3e9"></div>
<svg class="abs" style="left:38px;top:242.8px" width="10" height="9" viewBox="0 0 10 9"><rect x="0.3" y="0.5" width="2.6" height="8" rx="1" fill="#2a2ad8"/><rect x="3.4" y="0.5" width="2.8" height="8" rx="1" fill="#e02020"/><rect x="6.8" y="0.5" width="2.8" height="8" rx="1" fill="#f0a020"/></svg>
<div class="tree" style="left:51px;top:241.6px">Streamlines</div>
<div class="abs" style="left:31px;top:258.76px;width:7px;height:1px;background:#e0e3e9"></div>
<svg class="abs" style="left:38px;top:254.26px" width="10" height="9" viewBox="0 0 10 9"><rect x="0.6" y="0.6" width="8.8" height="7.8" rx="1" fill="#f2f7ff" stroke="#86b0ee" stroke-width="1.1"/><path d="M1 8.2 L1 6.6 L3.2 6.2 L4.6 4.8 L6.2 4.4 L7.4 2.8 L9 2.2 L9 8.2z" fill="#f09a10"/><path d="M1 6.4 L3.2 6 L4.6 4.6 L6.2 4.2 L7.4 2.6 L9 2" stroke="#2a2420" stroke-width="0.9" fill="none"/></svg>
<div class="tree" style="left:51px;top:253.06px">Total Stress - Maximum</div>
<div class="abs" style="left:31px;top:270.22px;width:7px;height:1px;background:#e0e3e9"></div>
<svg class="abs" style="left:38px;top:265.72px" width="10" height="9" viewBox="0 0 10 9"><rect x="0.6" y="0.6" width="8.8" height="7.8" rx="1" fill="#f2f7ff" stroke="#86b0ee" stroke-width="1.1"/><path d="M1 8.2 L1 6.6 L3.2 6.2 L4.6 4.8 L6.2 4.4 L7.4 2.8 L9 2.2 L9 8.2z" fill="#f09a10"/><path d="M1 6.4 L3.2 6 L4.6 4.6 L6.2 4.2 L7.4 2.6 L9 2" stroke="#2a2420" stroke-width="0.9" fill="none"/></svg>
<div class="tree" style="left:51px;top:264.52px">Total Stress - Minimum</div>
<div class="abs" style="left:31px;top:281.68px;width:7px;height:1px;background:#e0e3e9"></div>
<svg class="abs" style="left:38px;top:277.18px" width="10" height="9" viewBox="0 0 10 9"><rect x="0.6" y="0.6" width="8.8" height="7.8" rx="1" fill="#f2f7ff" stroke="#86b0ee" stroke-width="1.1"/><path d="M1 8.2 L1 6.6 L3.2 6.2 L4.6 4.8 L6.2 4.4 L7.4 2.8 L9 2.2 L9 8.2z" fill="#f09a10"/><path d="M1 6.4 L3.2 6 L4.6 4.6 L6.2 4.2 L7.4 2.6 L9 2" stroke="#2a2420" stroke-width="0.9" fill="none"/></svg>
<div class="tree" style="left:51px;top:275.98px">Effective Stress - Maximum</div>
<div class="abs" style="left:31px;top:293.14px;width:7px;height:1px;background:#e0e3e9"></div>
<svg class="abs" style="left:38px;top:288.64px" width="10" height="9" viewBox="0 0 10 9"><rect x="0.6" y="0.6" width="8.8" height="7.8" rx="1" fill="#f2f7ff" stroke="#86b0ee" stroke-width="1.1"/><path d="M1 8.2 L1 6.6 L3.2 6.2 L4.6 4.8 L6.2 4.4 L7.4 2.8 L9 2.2 L9 8.2z" fill="#f09a10"/><path d="M1 6.4 L3.2 6 L4.6 4.6 L6.2 4.2 L7.4 2.6 L9 2" stroke="#2a2420" stroke-width="0.9" fill="none"/></svg>
<div class="tree" style="left:51px;top:287.44px">Effective Stress - Intermediate</div>
<div class="abs" style="left:31px;top:304.6px;width:7px;height:1px;background:#e0e3e9"></div>
<svg class="abs" style="left:38px;top:300.1px" width="10" height="9" viewBox="0 0 10 9"><rect x="0.6" y="0.6" width="8.8" height="7.8" rx="1" fill="#f2f7ff" stroke="#86b0ee" stroke-width="1.1"/><path d="M1 8.2 L1 6.6 L3.2 6.2 L4.6 4.8 L6.2 4.4 L7.4 2.8 L9 2.2 L9 8.2z" fill="#f09a10"/><path d="M1 6.4 L3.2 6 L4.6 4.6 L6.2 4.2 L7.4 2.6 L9 2" stroke="#2a2420" stroke-width="0.9" fill="none"/></svg>
<div class="tree" style="left:51px;top:298.9px">Effective Stress - Minimum</div>
<div class="abs" style="left:31px;top:316.06px;width:7px;height:1px;background:#e0e3e9"></div>
<svg class="abs" style="left:38px;top:311.56px" width="10" height="9" viewBox="0 0 10 9"><rect x="0.6" y="0.6" width="8.8" height="7.8" rx="1" fill="#f2f7ff" stroke="#86b0ee" stroke-width="1.1"/><path d="M1 8.2 L1 6.6 L3.2 6.2 L4.6 4.8 L6.2 4.4 L7.4 2.8 L9 2.2 L9 8.2z" fill="#f09a10"/><path d="M1 6.4 L3.2 6 L4.6 4.6 L6.2 4.2 L7.4 2.6 L9 2" stroke="#2a2420" stroke-width="0.9" fill="none"/></svg>
<div class="tree" style="left:51px;top:310.36px">Suction Stress</div>
<div class="abs" style="left:31px;top:327.52px;width:7px;height:1px;background:#e0e3e9"></div>
<svg class="abs" style="left:38px;top:323.02px" width="10" height="9" viewBox="0 0 10 9"><rect x="0.6" y="0.6" width="8.8" height="7.8" rx="1" fill="#f2f7ff" stroke="#86b0ee" stroke-width="1.1"/><path d="M1 8.2 L1 6.6 L3.2 6.2 L4.6 4.8 L6.2 4.4 L7.4 2.8 L9 2.2 L9 8.2z" fill="#f09a10"/><path d="M1 6.4 L3.2 6 L4.6 4.6 L6.2 4.2 L7.4 2.6 L9 2" stroke="#2a2420" stroke-width="0.9" fill="none"/></svg>
<div class="tree" style="left:51px;top:321.82px">Field of Local Factor of Safety</div>
<div class="abs" style="left:31px;top:338.98px;width:7px;height:1px;background:#e0e3e9"></div>
<svg class="abs" style="left:38px;top:334.48px" width="10" height="9" viewBox="0 0 10 9"><rect x="0.6" y="0.6" width="8.8" height="7.8" rx="1" fill="#f2f7ff" stroke="#86b0ee" stroke-width="1.1"/><path d="M1 8.2 L1 6.6 L3.2 6.2 L4.6 4.8 L6.2 4.4 L7.4 2.8 L9 2.2 L9 8.2z" fill="#f09a10"/><path d="M1 6.4 L3.2 6 L4.6 4.6 L6.2 4.2 L7.4 2.6 L9 2" stroke="#2a2420" stroke-width="0.9" fill="none"/></svg>
<div class="tree" style="left:51px;top:333.28px;font-weight:bold;font-size:8.7px">Displacement</div>
<div class="abs" style="left:19px;top:350.44px;width:7px;height:1px;background:#e0e3e9"></div>
<svg class="abs" style="left:16px;top:346.94px" width="7" height="7" viewBox="0 0 7 7"><rect x="0.5" y="0.5" width="6" height="6" fill="#fff" stroke="#b4bccc" stroke-width="0.8"/><path d="M1.8 3.5h3.4" stroke="#4a5a8a" stroke-width="0.8"/><path d="M3.5 1.8v3.4" stroke="#4a5a8a" stroke-width="0.8"/></svg>
<svg class="abs" style="left:26px;top:345.94px" width="10" height="9" viewBox="0 0 10 9"><path d="M0.5 1.5 q0-1 1-1 h2.5 l1 1 h4 q0.5 0 0.5 0.8 v6.2 h-9z" fill="#f6dc86" stroke="#e2c060" stroke-width="0.5"/><path d="M0.5 3 h9 v5.5 h-9z" fill="#f6dc86"/><path d="M0.5 3 h9 v2 h-9z" fill="#fef6cc" opacity="0.8"/></svg>
<div class="tree" style="left:39px;top:344.74px">Results - Other Information</div>
<div class="abs" style="left:171.3px;top:57px;width:569.7px;height:531.6px;background:#000"></div>
<div class="abs" style="left:741px;top:57px;width:2px;height:531px;background:linear-gradient(90deg,#b8b8b8,#e4e4e4)"></div>
<svg class="abs" style="left:171px;top:57px" width="571" height="531" viewBox="171 57 571 531">
<defs><clipPath id="oc"><polygon points="487.3,158.7 530.5,166.8 560,172.4 582.5,177.6 605,183.9 618.5,193 624.1,199.1 642.2,238.2 659.8,276.8 674.3,300.9 687.2,320.2 698.4,341.1 709.7,362 714.5,373.3 716.3,387.5 623.1,490 566,552.7 400,496 247,445.6 235.7,437.7 231.2,410.7 229,377 223.4,350 222.2,321.2 231.2,316.7 271.7,287.5 339.2,247 400,212.6 433.7,192.4"/></clipPath><linearGradient id="dy" gradientUnits="userSpaceOnUse" x1="462" y1="247" x2="466" y2="263"><stop offset="0" stop-color="#d4d400"/><stop offset="1" stop-color="#eef00c"/></linearGradient></defs>
<g clip-path="url(#oc)">
<polygon points="487.3,158.7 530.5,166.8 560,172.4 582.5,177.6 605,183.9 618.5,193 624.1,199.1 642.2,238.2 659.8,276.8 674.3,300.9 687.2,320.2 698.4,341.1 709.7,362 714.5,373.3 716.3,387.5 623.1,490 566,552.7 400,496 247,445.6 235.7,437.7 231.2,410.7 229,377 223.4,350 222.2,321.2 231.2,316.7 271.7,287.5 339.2,247 400,212.6 433.7,192.4" fill="#0000ff"/>
<path d="M225,421 C225.8,421.3 229.9,422.8 233.5,424.0 C237.1,425.2 258.1,431.3 265.0,434.0 C271.9,436.7 301.9,450.1 310.0,453.5 C318.1,456.9 346.9,468.4 355.0,471.5 C363.1,474.6 391.9,485.0 400.0,488.0 C408.1,491.0 436.9,502.4 445.0,505.0 C453.1,507.6 482.5,516.0 490.0,517.4 C497.5,518.8 523.0,521.0 528.0,520.7 C533.0,520.4 541.3,516.4 546.0,514.0 C550.7,511.6 575.1,497.3 580.0,494.5 C584.9,491.7 596.5,485.1 600.0,482.8 C603.5,480.5 615.8,471.4 619.3,469.0 C622.8,466.6 635.1,458.7 638.6,456.0 C642.1,453.3 654.4,442.5 657.9,439.5 C661.4,436.5 674.2,425.2 677.1,422.5 C680.0,419.8 688.2,412.1 690.6,410.0 C693.0,407.9 700.6,402.1 704.1,399.0 C707.6,395.9 727.7,378.1 730.0,376.0 L760,300 L760,60 L200,60 L200,300Z" fill="#9090fc" stroke="rgba(0,0,0,0.35)" stroke-width="0.6"/>
<path d="M225,409 C225.5,409.2 227.4,409.5 231.0,410.7 C234.6,411.9 257.9,419.5 265.0,422.0 C272.1,424.5 301.9,435.4 310.0,438.9 C318.1,442.4 346.9,457.5 355.0,461.0 C363.1,464.5 391.9,474.8 400.0,477.5 C408.1,480.2 436.9,489.3 445.0,491.5 C453.1,493.7 484.5,500.8 490.0,501.6 C495.5,502.4 501.6,501.8 505.7,500.5 C509.8,499.2 529.3,489.9 535.0,487.5 C540.7,485.1 562.9,476.4 568.7,474.0 C574.6,471.6 595.4,463.0 600.0,461.0 C604.6,459.0 615.8,454.0 619.3,452.3 C622.8,450.6 635.1,443.6 638.6,441.7 C642.1,439.8 654.4,433.5 657.9,431.1 C661.4,428.7 673.6,417.6 677.1,414.7 C680.6,411.8 693.3,401.6 696.4,399.3 C699.5,397.0 708.9,391.5 711.9,389.6 C714.9,387.7 728.4,379.0 730.0,378.0 L760,300 L760,60 L200,60 L200,300Z" fill="#4cd2fa" stroke="rgba(0,0,0,0.35)" stroke-width="0.6"/>
<path d="M225,398 C225.5,398.1 227.4,398.5 231.0,399.5 C234.6,400.5 257.9,407.1 265.0,409.6 C272.1,412.1 301.9,423.9 310.0,427.6 C318.1,431.3 346.9,447.5 355.0,451.0 C363.1,454.5 392.9,464.7 400.0,467.0 C407.1,469.3 427.8,475.7 433.7,477.0 C439.6,478.3 461.1,481.8 465.0,481.5 C468.9,481.2 475.6,474.9 477.0,473.6 C478.4,472.3 479.4,468.1 481.0,467.0 C482.6,465.9 491.7,461.8 494.5,461.0 C497.3,460.2 506.8,459.2 512.5,458.0 C518.2,456.8 549.6,449.8 557.5,447.9 C565.4,446.0 594.4,438.3 600.0,436.9 C605.6,435.5 615.8,433.0 619.3,432.0 C622.8,431.0 635.1,426.7 638.6,425.3 C642.1,423.9 654.4,418.4 657.9,416.6 C661.4,414.8 673.6,407.2 677.1,405.0 C680.6,402.8 693.1,394.5 696.4,392.5 C699.7,390.5 710.8,384.6 713.8,382.9 C716.8,381.2 728.5,374.8 730.0,374.0 L760,300 L760,60 L200,60 L200,300Z" fill="#00ffff" stroke="rgba(0,0,0,0.35)" stroke-width="0.6"/>
<path d="M222,386 C222.7,386.2 226.1,386.9 230.0,388.0 C233.9,389.1 257.8,396.0 265.0,398.4 C272.2,400.8 301.9,411.5 310.0,415.2 C318.1,418.9 346.9,436.3 355.0,440.0 C363.1,443.7 393.5,454.1 400.0,456.0 C406.5,457.9 423.4,461.7 427.0,461.4 C430.6,461.1 439.3,454.8 440.5,452.4 C441.7,450.0 436.0,436.6 440.5,434.4 C445.0,432.2 481.5,428.6 490.0,427.6 C498.5,426.6 528.7,423.7 535.0,423.0 C541.3,422.3 554.1,420.5 560.0,419.7 C565.9,418.9 591.9,415.8 600.0,414.0 C608.1,412.2 642.5,402.1 650.0,399.5 C657.5,396.9 677.8,387.5 683.7,385.0 C689.6,382.5 711.0,373.3 715.2,371.4 C719.4,369.5 728.7,364.7 730.0,364.0 L760,300 L760,60 L200,60 L200,300Z" fill="#00f090" stroke="rgba(0,0,0,0.35)" stroke-width="0.6"/>
<path d="M220,376 C220.8,376.2 224.9,377.0 229.0,378.0 C233.1,379.0 257.7,384.8 265.0,387.0 C272.3,389.2 302.7,400.1 310.0,403.0 C317.3,405.9 339.9,416.9 346.0,419.7 C352.1,422.5 372.7,433.6 377.5,434.4 C382.3,435.2 397.5,431.7 398.9,428.7 C400.3,425.7 392.5,403.5 393.2,400.6 C393.9,397.7 404.1,396.5 406.7,396.0 C409.3,395.5 417.0,394.8 422.5,395.0 C428.0,395.2 459.4,398.0 467.5,398.4 C475.6,398.8 504.4,399.5 512.5,399.5 C520.6,399.5 549.6,398.7 557.5,398.4 C565.4,398.1 591.7,397.1 600.0,396.0 C608.3,394.9 642.5,387.8 650.0,386.0 C657.5,384.2 678.2,378.0 683.7,376.0 C689.2,374.0 706.5,365.7 710.7,363.5 C714.9,361.3 728.3,353.0 730.0,352.0 L760,300 L760,60 L200,60 L200,300Z" fill="#00ff00" stroke="rgba(0,0,0,0.35)" stroke-width="0.6"/>
<path d="M225,320 C225.6,319.7 227.0,319.6 231.2,316.7 C235.4,313.8 265.6,289.2 271.7,287.5 C277.8,285.8 295.3,296.0 298.7,297.6 C302.1,299.2 306.4,302.6 310.0,305.5 C313.6,308.4 336.8,327.0 339.2,330.2 C341.6,333.4 338.2,340.0 337.0,341.5 C335.8,343.0 329.6,347.3 325.7,347.1 C321.8,346.9 301.1,341.2 294.2,339.2 C287.3,337.2 254.9,326.6 249.2,324.6 C243.5,322.6 232.6,317.7 231.0,317.0Z" fill="#00f090" stroke="rgba(0,0,0,0.35)" stroke-width="0.6"/>
<path d="M330,240 C330.8,240.6 336.5,245.8 339.2,247.0 C341.9,248.2 355.6,251.5 359.5,253.7 C363.4,255.9 378.4,268.4 382.0,271.7 C385.6,275.0 398.0,285.7 400.0,290.0 C402.0,294.3 402.7,313.8 404.5,319.0 C406.3,324.2 417.2,344.5 420.0,348.0 C422.8,351.5 433.8,357.2 436.0,358.4 C438.2,359.6 441.0,360.1 445.0,361.0 C449.0,361.9 473.6,366.9 480.0,368.1 C486.4,369.3 508.2,373.4 516.0,374.4 C523.8,375.4 558.3,378.6 566.4,378.9 C574.5,379.2 599.4,378.4 606.0,378.0 C612.6,377.6 633.0,375.7 640.0,374.4 C647.0,373.1 677.9,365.4 683.7,363.5 C689.6,361.6 701.3,355.3 705.0,353.4 C708.7,351.5 723.2,343.0 725.0,342.0 L760,300 L760,60 L330,60Z" fill="#ffff00" stroke="rgba(0,0,0,0.35)" stroke-width="0.6"/>
<path d="M390,205 C390.7,205.8 395.7,212.7 398.0,214.0 C400.3,215.3 412.9,218.2 415.7,219.4 C418.5,220.6 427.2,225.7 429.0,227.0 C430.8,228.3 434.2,230.3 436.0,233.5 C437.8,236.7 447.8,258.1 449.5,262.7 C451.2,267.3 454.2,280.9 455.0,285.0 C455.8,289.1 457.4,304.0 458.5,307.7 C459.6,311.4 465.6,323.4 467.5,325.7 C469.4,328.0 477.3,331.4 480.0,333.0 C482.7,334.6 493.9,342.0 498.0,343.8 C502.1,345.6 518.8,351.4 525.0,352.8 C531.2,354.2 559.1,358.5 566.4,359.1 C573.7,359.7 599.4,360.1 606.0,360.0 C612.6,359.9 633.0,359.1 640.0,358.2 C647.0,357.3 678.3,351.8 683.7,350.5 C689.1,349.2 696.2,345.2 699.5,343.7 C702.8,342.2 718.2,334.9 720.0,334.0 L760,300 L760,60 L390,60Z" fill="url(#dy)" stroke="rgba(0,0,0,0.35)" stroke-width="0.6"/>
<path d="M535,150 C534.6,151.6 532.9,165.4 530.5,167.6 C528.1,169.8 511.4,172.5 508.0,174.4 C504.6,176.3 493.9,186.5 492.2,189.0 C490.5,191.5 489.0,199.7 488.9,202.5 C488.8,205.3 490.3,216.4 491.0,220.0 C491.7,223.6 496.0,238.0 496.7,242.5 C497.4,247.0 498.4,265.1 499.0,270.0 C499.6,274.9 501.4,292.7 503.4,297.0 C505.4,301.3 516.4,314.5 521.4,317.7 C526.4,320.9 553.2,330.2 559.2,332.1 C565.2,334.0 580.7,338.3 588.0,339.3 C595.3,340.3 631.8,342.9 640.0,342.9 C648.2,342.9 674.2,340.0 679.2,339.2 C684.2,338.4 691.8,334.9 695.0,333.6 C698.2,332.3 713.2,325.8 715.0,325.0 L760,300 L760,60 L535,60Z" fill="#ff9600" stroke="rgba(0,0,0,0.35)" stroke-width="0.6"/>
<path d="M590,160 C589.5,161.7 587.4,175.6 584.5,178.4 C581.6,181.2 560.9,188.2 557.5,191.2 C554.1,194.2 547.5,208.5 546.2,211.5 C544.9,214.5 543.5,221.2 543.0,225.0 C542.5,228.8 540.8,249.6 540.6,253.7 C540.4,257.8 540.7,267.1 541.2,270.0 C541.7,272.9 544.3,283.1 546.6,286.2 C548.9,289.3 561.9,301.4 566.4,304.2 C570.9,307.0 590.4,314.9 597.0,316.8 C603.6,318.7 633.2,324.3 640.0,324.9 C646.8,325.5 668.4,324.0 672.5,323.5 C676.6,323.0 683.1,320.2 686.0,319.0 C688.9,317.8 703.3,310.8 705.0,310.0 L760,300 L760,60 L590,60Z" fill="#ff0000" stroke="rgba(0,0,0,0.35)" stroke-width="0.6"/>
<path d="M630,190 C629.3,190.8 623.6,197.8 622.0,199.0 C620.4,200.2 613.7,201.8 611.7,203.0 C609.7,204.2 601.8,210.5 600.0,212.0 C598.2,213.5 593.2,217.3 591.5,220.0 C589.8,222.7 582.0,239.1 581.0,242.5 C580.0,245.9 580.0,255.7 580.2,258.2 C580.4,260.7 582.0,267.8 583.5,270.0 C585.0,272.2 593.7,280.3 597.0,282.6 C600.3,284.9 616.5,293.5 620.4,295.2 C624.3,296.9 636.3,300.7 640.0,301.5 C643.7,302.3 658.1,304.8 661.2,304.4 C664.3,304.0 671.7,299.3 674.7,297.6 C677.7,295.9 693.2,286.1 695.0,285.0 L760,250 L760,60 L630,60Z" fill="#e00000" stroke="rgba(0,0,0,0.35)" stroke-width="0.6"/>
<path d="M200,-95 L760,-436.6 M200,-83.5 L760,-425.1 M200,-72 L760,-413.6 M200,-60.5 L760,-402.1 M200,-49 L760,-390.6 M200,-37.5 L760,-379.1 M200,-26 L760,-367.6 M200,-14.5 L760,-356.1 M200,-3 L760,-344.6 M200,8.5 L760,-333.1 M200,20 L760,-321.6 M200,31.5 L760,-310.1 M200,43 L760,-298.6 M200,54.5 L760,-287.1 M200,66 L760,-275.6 M200,77.5 L760,-264.1 M200,89 L760,-252.6 M200,100.5 L760,-241.1 M200,112 L760,-229.6 M200,123.5 L760,-218.1 M200,135 L760,-206.6 M200,146.5 L760,-195.1 M200,158 L760,-183.6 M200,169.5 L760,-172.1 M200,181 L760,-160.6 M200,192.5 L760,-149.1 M200,204 L760,-137.6 M200,215.5 L760,-126.1 M200,227 L760,-114.6 M200,238.5 L760,-103.1 M200,250 L760,-91.6 M200,261.5 L760,-80.1 M200,273 L760,-68.6 M200,284.5 L760,-57.1 M200,296 L760,-45.6 M200,307.5 L760,-34.1 M200,319 L760,-22.6 M200,330.5 L760,-11.1 M200,342 L760,0.4 M200,353.5 L760,11.9 M200,365 L760,23.4 M200,376.5 L760,34.9 M200,388 L760,46.4 M200,399.5 L760,57.9 M200,411 L760,69.4 M200,422.5 L760,80.9 M200,434 L760,92.4 M200,445.5 L760,103.9 M200,457 L760,115.4 M200,468.5 L760,126.9 M200,480 L760,138.4 M200,491.5 L760,149.9 M200,503 L760,161.4 M200,514.5 L760,172.9 M200,526 L760,184.4 M200,537.5 L760,195.9 M200,549 L760,207.4 M200,560.5 L760,218.9 M200,572 L760,230.4 M200,583.5 L760,241.9 M200,595 L760,253.4 M200,606.5 L760,264.9 M200,618 L760,276.4 M200,629.5 L760,287.9 M200,641 L760,299.4 M200,652.5 L760,310.9 M200,664 L760,322.4 M200,675.5 L760,333.9 M200,687 L760,345.4 M200,698.5 L760,356.9 M200,710 L760,368.4 M200,721.5 L760,379.9 M200,733 L760,391.4 M200,744.5 L760,402.9 M200,756 L760,414.4 M200,767.5 L760,425.9 M200,779 L760,437.4 M200,790.5 L760,448.9 M200,802 L760,460.4 M200,813.5 L760,471.9 M200,825 L760,483.4 M200,836.5 L760,494.9 M200,848 L760,506.4 M200,859.5 L760,517.9 M200,871 L760,529.4 M200,882.5 L760,540.9 M200,894 L760,552.4 M200,905.5 L760,563.9 M200,917 L760,575.4 M200,928.5 L760,586.9 M200,-95 L760,73 M200,-83.5 L760,84.5 M200,-72 L760,96 M200,-60.5 L760,107.5 M200,-49 L760,119 M200,-37.5 L760,130.5 M200,-26 L760,142 M200,-14.5 L760,153.5 M200,-3 L760,165 M200,8.5 L760,176.5 M200,20 L760,188 M200,31.5 L760,199.5 M200,43 L760,211 M200,54.5 L760,222.5 M200,66 L760,234 M200,77.5 L760,245.5 M200,89 L760,257 M200,100.5 L760,268.5 M200,112 L760,280 M200,123.5 L760,291.5 M200,135 L760,303 M200,146.5 L760,314.5 M200,158 L760,326 M200,169.5 L760,337.5 M200,181 L760,349 M200,192.5 L760,360.5 M200,204 L760,372 M200,215.5 L760,383.5 M200,227 L760,395 M200,238.5 L760,406.5 M200,250 L760,418 M200,261.5 L760,429.5 M200,273 L760,441 M200,284.5 L760,452.5 M200,296 L760,464 M200,307.5 L760,475.5 M200,319 L760,487 M200,330.5 L760,498.5 M200,342 L760,510 M200,353.5 L760,521.5 M200,365 L760,533 M200,376.5 L760,544.5 M200,388 L760,556 M200,399.5 L760,567.5 M200,411 L760,579 M200,422.5 L760,590.5 M200,434 L760,602 M200,445.5 L760,613.5 M200,457 L760,625 M200,468.5 L760,636.5 M200,480 L760,648 M200,491.5 L760,659.5 M200,503 L760,671 M200,514.5 L760,682.5 M200,526 L760,694 M200,537.5 L760,705.5 M200,549 L760,717 M200,560.5 L760,728.5 M200,572 L760,740 M200,583.5 L760,751.5 M200,595 L760,763 M200,606.5 L760,774.5 M200,618 L760,786 M200,629.5 L760,797.5 M200,641 L760,809 M200,652.5 L760,820.5 M200,664 L760,832 M200,675.5 L760,843.5 M200,687 L760,855 M200,698.5 L760,866.5 M200,710 L760,878 M200,721.5 L760,889.5 M200,733 L760,901 M200,744.5 L760,912.5 M200,756 L760,924 M200,767.5 L760,935.5 M200,779 L760,947 M200,790.5 L760,958.5 M200,802 L760,970 M200,813.5 L760,981.5 M120,120 L450,580 M131,120 L461,580 M142,120 L472,580 M153,120 L483,580 M164,120 L494,580 M175,120 L505,580 M186,120 L516,580 M197,120 L527,580 M208,120 L538,580 M219,120 L549,580 M230,120 L560,580 M241,120 L571,580 M252,120 L582,580 M263,120 L593,580 M274,120 L604,580 M285,120 L615,580 M296,120 L626,580 M307,120 L637,580 M318,120 L648,580 M329,120 L659,580 M340,120 L670,580 M351,120 L681,580 M362,120 L692,580 M373,120 L703,580 M384,120 L714,580 M395,120 L725,580 M406,120 L736,580 M417,120 L747,580 M428,120 L758,580 M439,120 L769,580 M450,120 L780,580 M461,120 L791,580 M472,120 L802,580 M483,120 L813,580 M494,120 L824,580 M505,120 L835,580 M516,120 L846,580 M527,120 L857,580 M538,120 L868,580 M549,120 L879,580 M560,120 L890,580 M571,120 L901,580 M582,120 L912,580 M593,120 L923,580 M604,120 L934,580 M615,120 L945,580 M626,120 L956,580 M637,120 L967,580 M648,120 L978,580 M659,120 L989,580 M670,120 L1000,580 M681,120 L1011,580 M692,120 L1022,580 M703,120 L1033,580 M714,120 L1044,580 M725,120 L1055,580 M736,120 L1066,580 M747,120 L1077,580 M758,120 L1088,580 M769,120 L1099,580" stroke="#000" stroke-opacity="0.07" stroke-width="0.7" fill="none"/>
</g>
<polygon points="226.7,277.4 486.6,97.9 565.4,108 591,123.7 624.1,199.1 618.5,193 605,183.9 582.5,177.6 560,172.4 530.5,166.8 487.3,158.7 433.7,192.4 400,212.6 339.2,247 271.7,287.5 231.2,316.7 228,318.5" fill="#242b2d" stroke="#242b2d" stroke-width="0.7"/>
<clipPath id="dc"><polygon points="226.7,277.4 486.6,97.9 565.4,108 591,123.7 624.1,199.1 618.5,193 605,183.9 582.5,177.6 560,172.4 530.5,166.8 487.3,158.7 433.7,192.4 400,212.6 339.2,247 271.7,287.5 231.2,316.7 228,318.5"/></clipPath>
<path clip-path="url(#dc)" d="M200,-95 L760,-436.6 M200,-83.5 L760,-425.1 M200,-72 L760,-413.6 M200,-60.5 L760,-402.1 M200,-49 L760,-390.6 M200,-37.5 L760,-379.1 M200,-26 L760,-367.6 M200,-14.5 L760,-356.1 M200,-3 L760,-344.6 M200,8.5 L760,-333.1 M200,20 L760,-321.6 M200,31.5 L760,-310.1 M200,43 L760,-298.6 M200,54.5 L760,-287.1 M200,66 L760,-275.6 M200,77.5 L760,-264.1 M200,89 L760,-252.6 M200,100.5 L760,-241.1 M200,112 L760,-229.6 M200,123.5 L760,-218.1 M200,135 L760,-206.6 M200,146.5 L760,-195.1 M200,158 L760,-183.6 M200,169.5 L760,-172.1 M200,181 L760,-160.6 M200,192.5 L760,-149.1 M200,204 L760,-137.6 M200,215.5 L760,-126.1 M200,227 L760,-114.6 M200,238.5 L760,-103.1 M200,250 L760,-91.6 M200,261.5 L760,-80.1 M200,273 L760,-68.6 M200,284.5 L760,-57.1 M200,296 L760,-45.6 M200,307.5 L760,-34.1 M200,319 L760,-22.6 M200,330.5 L760,-11.1 M200,342 L760,0.4 M200,353.5 L760,11.9 M200,365 L760,23.4 M200,376.5 L760,34.9 M200,388 L760,46.4 M200,399.5 L760,57.9 M200,411 L760,69.4 M200,422.5 L760,80.9 M200,434 L760,92.4 M200,445.5 L760,103.9 M200,457 L760,115.4 M200,468.5 L760,126.9 M200,480 L760,138.4 M200,491.5 L760,149.9 M200,503 L760,161.4 M200,514.5 L760,172.9 M200,526 L760,184.4 M200,537.5 L760,195.9 M200,549 L760,207.4 M200,560.5 L760,218.9 M200,572 L760,230.4 M200,583.5 L760,241.9 M200,595 L760,253.4 M200,606.5 L760,264.9 M200,618 L760,276.4 M200,629.5 L760,287.9 M200,641 L760,299.4 M200,652.5 L760,310.9 M200,664 L760,322.4 M200,675.5 L760,333.9 M200,687 L760,345.4 M200,698.5 L760,356.9 M200,710 L760,368.4 M200,721.5 L760,379.9 M200,733 L760,391.4 M200,744.5 L760,402.9 M200,756 L760,414.4 M200,767.5 L760,425.9 M200,779 L760,437.4 M200,790.5 L760,448.9 M200,802 L760,460.4 M200,813.5 L760,471.9 M200,825 L760,483.4 M200,836.5 L760,494.9 M200,848 L760,506.4 M200,859.5 L760,517.9 M200,871 L760,529.4 M200,882.5 L760,540.9 M200,894 L760,552.4 M200,905.5 L760,563.9 M200,917 L760,575.4 M200,928.5 L760,586.9 M200,-95 L760,73 M200,-83.5 L760,84.5 M200,-72 L760,96 M200,-60.5 L760,107.5 M200,-49 L760,119 M200,-37.5 L760,130.5 M200,-26 L760,142 M200,-14.5 L760,153.5 M200,-3 L760,165 M200,8.5 L760,176.5 M200,20 L760,188 M200,31.5 L760,199.5 M200,43 L760,211 M200,54.5 L760,222.5 M200,66 L760,234 M200,77.5 L760,245.5 M200,89 L760,257 M200,100.5 L760,268.5 M200,112 L760,280 M200,123.5 L760,291.5 M200,135 L760,303 M200,146.5 L760,314.5 M200,158 L760,326 M200,169.5 L760,337.5 M200,181 L760,349 M200,192.5 L760,360.5 M200,204 L760,372 M200,215.5 L760,383.5 M200,227 L760,395 M200,238.5 L760,406.5 M200,250 L760,418 M200,261.5 L760,429.5 M200,273 L760,441 M200,284.5 L760,452.5 M200,296 L760,464 M200,307.5 L760,475.5 M200,319 L760,487 M200,330.5 L760,498.5 M200,342 L760,510 M200,353.5 L760,521.5 M200,365 L760,533 M200,376.5 L760,544.5 M200,388 L760,556 M200,399.5 L760,567.5 M200,411 L760,579 M200,422.5 L760,590.5 M200,434 L760,602 M200,445.5 L760,613.5 M200,457 L760,625 M200,468.5 L760,636.5 M200,480 L760,648 M200,491.5 L760,659.5 M200,503 L760,671 M200,514.5 L760,682.5 M200,526 L760,694 M200,537.5 L760,705.5 M200,549 L760,717 M200,560.5 L760,728.5 M200,572 L760,740 M200,583.5 L760,751.5 M200,595 L760,763 M200,606.5 L760,774.5 M200,618 L760,786 M200,629.5 L760,797.5 M200,641 L760,809 M200,652.5 L760,820.5 M200,664 L760,832 M200,675.5 L760,843.5 M200,687 L760,855 M200,698.5 L760,866.5 M200,710 L760,878 M200,721.5 L760,889.5 M200,733 L760,901 M200,744.5 L760,912.5 M200,756 L760,924 M200,767.5 L760,935.5 M200,779 L760,947 M200,790.5 L760,958.5 M200,802 L760,970 M200,813.5 L760,981.5 M120,120 L450,580 M131,120 L461,580 M142,120 L472,580 M153,120 L483,580 M164,120 L494,580 M175,120 L505,580 M186,120 L516,580 M197,120 L527,580 M208,120 L538,580 M219,120 L549,580 M230,120 L560,580 M241,120 L571,580 M252,120 L582,580 M263,120 L593,580 M274,120 L604,580 M285,120 L615,580 M296,120 L626,580 M307,120 L637,580 M318,120 L648,580 M329,120 L659,580 M340,120 L670,580 M351,120 L681,580 M362,120 L692,580 M373,120 L703,580 M384,120 L714,580 M395,120 L725,580 M406,120 L736,580 M417,120 L747,580 M428,120 L758,580 M439,120 L769,580 M450,120 L780,580 M461,120 L791,580 M472,120 L802,580 M483,120 L813,580 M494,120 L824,580 M505,120 L835,580 M516,120 L846,580 M527,120 L857,580 M538,120 L868,580 M549,120 L879,580 M560,120 L890,580 M571,120 L901,580 M582,120 L912,580 M593,120 L923,580 M604,120 L934,580 M615,120 L945,580 M626,120 L956,580 M637,120 L967,580 M648,120 L978,580 M659,120 L989,580 M670,120 L1000,580 M681,120 L1011,580 M692,120 L1022,580 M703,120 L1033,580 M714,120 L1044,580 M725,120 L1055,580 M736,120 L1066,580 M747,120 L1077,580 M758,120 L1088,580 M769,120 L1099,580" stroke="#fff" stroke-opacity="0.045" stroke-width="0.8" fill="none"/>
<polygon points="222.3,351.5 226.5,354.5 223,358" fill="#ffd800"/>
<g stroke="#e2e2e2" stroke-width="0.95" fill="none">
<polyline points="226.7,277.4 486.6,97.9 565.4,108 591,123.7 624.1,199.1 642.2,238.2 659.8,276.8"/>
<polyline points="486.6,97.9 487.3,158.7"/>
<polyline points="367.4,179.5 369.6,232.4"/>
<polyline points="367.4,179.5 400,185.6 448.4,194.6"/>
<polyline points="565.4,108 494.5,159.7 448.4,194.4 413.5,220 307.7,298.3"/>
<polyline points="226.7,277.4 307.7,298.3"/>
<path d="M307.7,298.3 Q325,308 339.2,328 L361.7,350 L400,387 L472,460 L501,490 L566,552.7"/>
<path d="M448.4,194.6 Q468,205 478.7,220 L513.3,270 L575.5,358.4 L593.5,385"/>
<polyline points="226.7,277.4 229.5,350 236.5,438 242.5,440"/>
<polyline points="362,480.8 564,551.5"/><polyline points="566,552.7 716,388"/>
</g>
</svg>
<div class="abs" style="left:743px;top:57px;width:156px;height:531px;background:#f4f6fa"></div>
<div class="hdr" style="left:745px;top:57px;width:154px;padding-left:2px">Edit Bar - Results</div>
<div class="abs" style="left:745px;top:69px;width:154px;height:519px;background:#fff"></div>
<svg class="abs" style="left:885.5px;top:58.8px" width="13" height="7" viewBox="0 0 13 7"><rect x="0.3" y="0.3" width="5.8" height="6.2" fill="#f2f5fa" stroke="#9aa6ba" stroke-width="0.5"/><rect x="6.7" y="0.3" width="5.8" height="6.2" fill="#f2f5fa" stroke="#9aa6ba" stroke-width="0.5"/><path d="M2.3 1.2h1.8v2.4h-1.8zM1.6 3.7h3.2M3.2 3.7v2" stroke="#333" stroke-width="0.7" fill="none"/><path d="M8.1 1.8l3 3m0-3l-3 3" stroke="#222" stroke-width="0.9"/></svg>
<div class="grp" style="top:71px;height:12px;line-height:12px;padding-left:0.5px">Displacement</div><svg class="abs" style="left:888px;top:75px" width="6" height="4" viewBox="0 0 6 4"><path d="M0.5 0.5h5l-2.5 3z" fill="#6a7588"/></svg>
<div class="abs" style="left:747px;top:83px;width:151px;height:172px;background:#fff;border:1px solid #dde4ee;border-top:none"></div>
<div class="rt" style="left:801px;top:84.7px;">Displacement xyz [m]</div>
<div class="abs" style="left:801px;top:103.9px;width:18px;height:9.2px;background:#b40a0a"></div>
<div class="abs" style="left:801px;top:114.99px;width:18px;height:9.2px;background:#ff0000"></div>
<div class="abs" style="left:801px;top:126.08px;width:18px;height:9.2px;background:#f59600"></div>
<div class="abs" style="left:801px;top:137.17px;width:18px;height:9.2px;background:#d2c800"></div>
<div class="abs" style="left:801px;top:148.26px;width:18px;height:9.2px;background:#ffff00"></div>
<div class="abs" style="left:801px;top:159.35px;width:18px;height:9.2px;background:#00ff00"></div>
<div class="abs" style="left:801px;top:170.44px;width:18px;height:9.2px;background:#00dc82"></div>
<div class="abs" style="left:801px;top:181.53px;width:18px;height:9.2px;background:#00ffff"></div>
<div class="abs" style="left:801px;top:192.62px;width:18px;height:9.2px;background:#3cc8f0"></div>
<div class="abs" style="left:801px;top:203.71px;width:18px;height:9.2px;background:#8c8cff"></div>
<div class="abs" style="left:801px;top:214.8px;width:18px;height:9.2px;background:#0000ff"></div>
<div class="rt" style="left:823.6px;top:96.9px;font-size:8.1px">0.002</div>
<div class="rt" style="left:823.6px;top:107.84px;font-size:8.1px">0.002</div>
<div class="rt" style="left:823.6px;top:118.78px;font-size:8.1px">0.002</div>
<div class="rt" style="left:823.6px;top:129.72px;font-size:8.1px">0.001</div>
<div class="rt" style="left:823.6px;top:140.66px;font-size:8.1px">0.001</div>
<div class="rt" style="left:823.6px;top:151.6px;font-size:8.1px">0.001</div>
<div class="rt" style="left:823.6px;top:162.54px;font-size:8.1px">0.001</div>
<div class="rt" style="left:823.6px;top:173.48px;font-size:8.1px">0.001</div>
<div class="rt" style="left:823.6px;top:184.42px;font-size:8.1px">0.001</div>
<div class="rt" style="left:823.6px;top:195.36px;font-size:8.1px">0.000</div>
<div class="rt" style="left:823.6px;top:206.3px;font-size:8.1px">0.000</div>
<div class="rt" style="left:823.6px;top:217.24px;font-size:8.1px">0.000</div>
<div class="rt" style="left:801px;top:230.4px;">Max:</div>
<div class="rt" style="left:823.6px;top:230.4px;font-size:8.1px">0.002</div>
<div class="rt" style="left:801px;top:241px;">Min :</div>
<div class="rt" style="left:823.6px;top:241px;font-size:8.1px">0.000</div>
<div class="grp" style="top:258.5px;height:11px;line-height:11px;padding-left:0.5px">Time Layer</div><svg class="abs" style="left:888px;top:262.5px" width="6" height="4" viewBox="0 0 6 4"><path d="M0.5 0.5h5l-2.5 3z" fill="#6a7588"/></svg>
<div class="abs" style="left:747px;top:269.5px;width:151px;height:63.5px;background:#fff;border:1px solid #dde4ee;border-top:none"></div>
<div class="abs" style="left:750.5px;top:275px;width:142px;height:13.6px;background:#e3e3e3;border:1px solid #b4b4b4"></div>
<div class="rt" style="left:752.3px;top:275.7px;">Time 10 - 20 hours</div>
<svg class="abs" style="left:882px;top:279.5px" width="7" height="5" viewBox="0 0 7 5"><path d="M0.8 1l2.7 2.7L6.2 1" fill="none" stroke="#444" stroke-width="0.9"/></svg>
<div class="abs" style="left:750.5px;top:296px;width:142px;height:14.4px;background:#f0f0f0;border:1px solid #e4e4e4"></div>
<div class="abs" style="left:866px;top:298px;width:13px;height:10.5px;background:#cdcdcd"></div>
<svg class="abs" style="left:756px;top:300px" width="5" height="7" viewBox="0 0 5 7"><path d="M4 0.8L1.2 3.5L4 6.2" fill="none" stroke="#333" stroke-width="1"/></svg>
<svg class="abs" style="left:882.5px;top:300px" width="5" height="7" viewBox="0 0 5 7"><path d="M1 0.8L3.8 3.5L1 6.2" fill="none" stroke="#333" stroke-width="1"/></svg>
<div class="cb" style="left:750.8px;top:316.8px;width:9px;height:9px;border-color:#555"></div>
<div class="rt" style="left:764.4px;top:315.2px;">Flow Animation</div>
<div class="grp" style="top:337px;height:11px;line-height:11px;padding-left:0.5px">Tools and Options</div><svg class="abs" style="left:888px;top:341px" width="6" height="4" viewBox="0 0 6 4"><path d="M0.5 0.5h5l-2.5 3z" fill="#6a7588"/></svg>
<div class="abs" style="left:747px;top:348px;width:151px;height:36px;background:#fff;border:1px solid #dde4ee;border-top:none"></div>
<svg class="abs" style="left:748.5px;top:349px" width="10" height="10" viewBox="0 0 10 10"><rect x="0.5" y="0.5" width="9" height="9" fill="#f4f8ff" stroke="#3a62c8" stroke-width="1"/><path d="M2 8L8 2" stroke="#e02020" stroke-width="1.2"/><rect x="1.3" y="7" width="1.6" height="1.6" fill="#e02020"/><rect x="7" y="1.3" width="1.6" height="1.6" fill="#e02020"/></svg>
<div class="rt" style="left:761.3px;top:347.5px;">Cross-Section Line Chart</div>
<svg class="abs" style="left:748.5px;top:361.5px" width="10" height="10" viewBox="0 0 10 10"><rect x="0.5" y="0.5" width="9" height="9" fill="#f4f8ff" stroke="#3a62c8" stroke-width="1"/><rect x="1" y="2.5" width="8" height="2" fill="#e02020"/><rect x="1" y="5.5" width="8" height="3" fill="#5a82e0"/></svg>
<div class="rt" style="left:761.3px;top:359.9px;">Boundary Line Chart</div>
<div class="cb" style="left:749px;top:373.8px;width:9px;height:9px;border-color:#7a8cc8"></div>
<div class="rt" style="left:761.3px;top:372px;">Show Min/Max Values</div>
<div class="grp" style="top:388px;height:11px;line-height:11px;padding-left:0.5px">Displacement Options</div><svg class="abs" style="left:888px;top:392px" width="6" height="4" viewBox="0 0 6 4"><path d="M0.5 0.5h5l-2.5 3z" fill="#6a7588"/></svg>
<div class="abs" style="left:747px;top:399px;width:151px;height:73.5px;background:#fff;border:1px solid #dde4ee;border-top:none"></div>
<div class="cb" style="left:749.3px;top:400.5px;width:8.6px;height:8.6px;border-color:#7a8cc8"></div><svg class="abs" style="left:750.3px;top:401.3px" width="7" height="7" viewBox="0 0 7 7"><path d="M1 3.6l1.8 1.8L6 1.6" fill="none" stroke="#1a6a1a" stroke-width="1.3"/></svg>
<div class="rt" style="left:761.5px;top:398.5px;">XYZ-Displacement</div>
<div class="cb" style="left:749.3px;top:412.7px;width:8.6px;height:8.6px;border-color:#7a8cc8"></div>
<div class="rt" style="left:761.5px;top:410.7px;">XY-Displacement</div>
<div class="cb" style="left:749.3px;top:425.2px;width:8.6px;height:8.6px;border-color:#7a8cc8"></div>
<div class="rt" style="left:761.5px;top:423.2px;">X-Displacement</div>
<div class="cb" style="left:749.3px;top:437.5px;width:8.6px;height:8.6px;border-color:#7a8cc8"></div>
<div class="rt" style="left:761.5px;top:435.5px;">Y-Displacement</div>
<div class="cb" style="left:749.3px;top:449.7px;width:8.6px;height:8.6px;border-color:#7a8cc8"></div>
<div class="rt" style="left:761.5px;top:447.7px;">Z-Displacement</div>
<div class="cb" style="left:749.3px;top:462.2px;width:8.6px;height:8.6px;border-color:#7a8cc8"></div><svg class="abs" style="left:750.3px;top:463px" width="7" height="7" viewBox="0 0 7 7"><path d="M1 3.6l1.8 1.8L6 1.6" fill="none" stroke="#1a6a1a" stroke-width="1.3"/></svg>
<div class="rt" style="left:761.5px;top:460.2px;">Display Deformed Mesh</div>
<div class="grp" style="top:476px;height:11px;line-height:11px;padding-left:0.5px">Mesh Deformation Factor</div><svg class="abs" style="left:888px;top:480px" width="6" height="4" viewBox="0 0 6 4"><path d="M0.5 0.5h5l-2.5 3z" fill="#6a7588"/></svg>
<div class="abs" style="left:747px;top:487px;width:151px;height:50px;background:#fff;border:1px solid #dde4ee;border-top:none"></div>
<div class="rt" style="left:750.6px;top:493.4px;">Factor:</div>
<div class="abs" style="left:806.5px;top:492.5px;width:48.5px;height:14.3px;background:#fff;border:1px solid #c8c8c8"></div>
<div class="rt" style="left:810px;top:493.4px;color:#8a8a8a;font-size:8.1px">4896.7</div>
<div class="cb" style="left:750.6px;top:515.5px;width:9px;height:9px;border-color:#444"></div><svg class="abs" style="left:751.6px;top:516.5px" width="7" height="7" viewBox="0 0 7 7"><path d="M1 3.6l1.8 1.8L6 1.6" fill="none" stroke="#1a6a1a" stroke-width="1.3"/></svg>
<div class="rt" style="left:761.9px;top:513.7px;">Automatic</div>
<div class="abs" style="left:806.5px;top:512px;width:48.5px;height:15.7px;background:#cccccc;border:1px solid #bfbfbf"></div>
<div class="rt" style="left:820.5px;top:513.7px;color:#888">Apply</div>
<div class="grp" style="top:538.5px;height:10px;line-height:10px;padding-left:0.5px">Help</div><svg class="abs" style="left:888px;top:542.5px" width="6" height="4" viewBox="0 0 6 4"><path d="M0.5 0.5h5l-2.5 3z" fill="#6a7588"/></svg>
<div class="abs" style="left:747px;top:548.5px;width:151px;height:37.5px;background:#ffffe1;border:1px solid #e4e4c8;border-top:none"></div>
<svg class="abs" style="left:748px;top:555.5px" width="10" height="10" viewBox="0 0 10 10"><circle cx="5" cy="5" r="4.6" fill="#f29a1a"/><circle cx="5" cy="5" r="4.6" fill="none" stroke="#d07808" stroke-width="0.6"/><rect x="4.3" y="4.2" width="1.4" height="3.4" fill="#fff"/><rect x="4.3" y="2.2" width="1.4" height="1.3" fill="#fff"/></svg>
<div class="rt" style="left:761.5px;top:549.7px;">Right click on the color scale to</div>
<div class="rt" style="left:761.5px;top:559.9px;">display options</div>
<svg class="abs" style="left:748px;top:574px" width="10" height="10" viewBox="0 0 10 10"><circle cx="5" cy="5" r="4.6" fill="#3cb43c"/><circle cx="5" cy="5" r="4.6" fill="none" stroke="#228a22" stroke-width="0.6"/><path d="M5.2 2.4L2.4 5l2.8 2.6M2.8 5h4.8" fill="none" stroke="#fff" stroke-width="1.3"/></svg>
<div class="rt" style="left:761.5px;top:572.7px;">Back: Boundary Conditions</div>
<div class="abs" style="left:1px;top:588px;width:898px;height:18px;background:#f0f0f0"></div>
<div class="abs" style="left:1px;top:588px;width:167px;height:1px;background:linear-gradient(#fff 40%,#a8a8a8 40%)"></div>
<div class="abs" style="left:171.3px;top:588px;width:569.7px;height:0.6px;background:#000"></div>
<div class="abs" style="left:2px;top:588px;width:35.5px;height:17.5px;background:#fbfbfb;border:1px solid #9a9a9a;border-top:none;border-radius:0 0 2px 2px;box-shadow:1px 1px 0 #c8c8c8"></div><svg class="abs" style="left:4px;top:592.5px" width="10" height="10" viewBox="0 0 10 10"><path d="M2 1v7h3M2 4.5h3" stroke="#888" stroke-width="0.7" fill="none"/><rect x="0.5" y="0.3" width="3.5" height="2.6" fill="#f2c84e"/><rect x="4.5" y="3.2" width="3.5" height="2.6" fill="#f2c84e"/><rect x="4.5" y="6.8" width="3.5" height="2.6" fill="#f2c84e"/></svg><div class="tab" style="left:15px;top:591.2px">Data</div>
<div class="abs" style="left:37.5px;top:589.5px;width:34.5px;height:15.5px;background:#f1f1f1;border:1px solid #a6a6a6;border-radius:0 0 2.5px 2.5px"></div><svg class="abs" style="left:40px;top:592.5px" width="9" height="9" viewBox="0 0 11 10"><path d="M0.5 5.2Q5.5 0.2 10.5 5.2Q5.5 8 0.5 5.2z" fill="#fff" stroke="#333" stroke-width="0.9"/><circle cx="5.5" cy="4.8" r="1.8" fill="#222"/><path d="M0.5 3.5Q5.5 -0.5 10.5 3.5" stroke="#333" stroke-width="1" fill="none"/></svg><div class="tab" style="left:51.2px;top:591.2px">View</div>
<div class="abs" style="left:72px;top:589.5px;width:50px;height:15.5px;background:#f1f1f1;border:1px solid #a6a6a6;border-radius:0 0 2.5px 2.5px"></div><svg class="abs" style="left:74px;top:592.5px" width="11" height="10" viewBox="0 0 11 10"><path d="M0.5 3.5l3-2.5h7l-3 2.5z" fill="#7aa8f0" stroke="#2a52c0" stroke-width="0.6"/><path d="M0.5 3.5h7v5.5h-7z" fill="#4a82e8" stroke="#2a52c0" stroke-width="0.6"/><path d="M7.5 3.5l3-2.5v5.5l-3 2.5z" fill="#2a5ad0" stroke="#2a52c0" stroke-width="0.6"/><path d="M0.5 5.3h7M0.5 7.1h7" stroke="#cfe0ff" stroke-width="0.6"/></svg><div class="tab" style="left:86.2px;top:591.2px">Sections</div>
<div class="abs" style="left:172.5px;top:589.5px;width:55px;height:15.5px;background:#f1f1f1;border:1px solid #a6a6a6;border-radius:0 0 2.5px 2.5px"></div><svg class="abs" style="left:174px;top:592.5px" width="11" height="10" viewBox="0 0 11 10"><path d="M0.5 9.5L10 9.5L10 1.5z" fill="#5ad05a" stroke="#2a8a2a" stroke-width="0.7"/><path d="M2 8L9 2" stroke="#3a62d8" stroke-width="1.3"/><path d="M8 1l2 0.5-0.5 2z" fill="#e8a020"/></svg><div class="tab" style="left:185px;top:591.2px">Geometry</div>
<div class="abs" style="left:227.5px;top:589.5px;width:37px;height:15.5px;background:#f1f1f1;border:1px solid #a6a6a6;border-radius:0 0 2.5px 2.5px"></div><svg class="abs" style="left:229px;top:592.5px" width="11" height="10" viewBox="0 0 11 10"><path d="M0.5 9.5V4.5L5 0.5H10.5V9.5z" fill="#a8c4f4" stroke="#3a62c8" stroke-width="0.7"/><path d="M3 2.5V9.5M5.5 0.8V9.5M8 0.8V9.5M0.8 4.5H10.5M0.8 7H10.5M3.5 2.2H10.5" stroke="#3a62c8" stroke-width="0.5"/></svg><div class="tab" style="left:240.5px;top:591.2px">Mesh</div>
<div class="abs" style="left:264.5px;top:589.5px;width:91.5px;height:15.5px;background:#f1f1f1;border:1px solid #a6a6a6;border-radius:0 0 2.5px 2.5px"></div><svg class="abs" style="left:267px;top:592.5px" width="11" height="10" viewBox="0 0 11 10"><rect x="0.5" y="0.5" width="10" height="9" fill="#6a9af0" stroke="#2a52c0" stroke-width="0.8"/><path d="M1 4Q4 1 6 4T10 5V9H1z" fill="#e8e8f4"/><circle cx="7.5" cy="6.5" r="1.8" fill="#e03030"/><circle cx="3.5" cy="3.2" r="1.2" fill="#f0b030"/></svg><div class="tab" style="left:279.5px;top:591.2px">Domain Properties</div>
<div class="abs" style="left:356px;top:589.5px;width:85px;height:15.5px;background:#f1f1f1;border:1px solid #a6a6a6;border-radius:0 0 2.5px 2.5px"></div><svg class="abs" style="left:358.5px;top:592.5px" width="11" height="10" viewBox="0 0 11 10"><rect x="0.5" y="0.5" width="10" height="9" rx="1" fill="#f0b830" stroke="#b07808" stroke-width="0.8"/><path d="M5.5 2v4.5M3.3 4.8L5.5 7.2L7.7 4.8" stroke="#1a3ac0" stroke-width="1.5" fill="none"/></svg><div class="tab" style="left:370.7px;top:591.2px">Initial Conditions</div>
<div class="abs" style="left:441px;top:589.5px;width:100px;height:15.5px;background:#f1f1f1;border:1px solid #a6a6a6;border-radius:0 0 2.5px 2.5px"></div><svg class="abs" style="left:443.5px;top:592.5px" width="11" height="10" viewBox="0 0 11 10"><path d="M1 9.5V4.5L4.5 1H10V9.5z" fill="#f4f4f4"/><path d="M1 9.5V4.5L4.5 1" stroke="#e03020" stroke-width="1.5" fill="none"/><path d="M4.5 1H10" stroke="#30a030" stroke-width="1.5"/><path d="M10 1V9.5" stroke="#3060d0" stroke-width="1.2"/><path d="M1 9.2H10" stroke="#e0a020" stroke-width="1.2"/></svg><div class="tab" style="left:455.7px;top:591.2px">Boundary Conditions</div>
<div class="abs" style="left:541px;top:588px;width:46.5px;height:17.5px;background:#fbfbfb;border:1px solid #9a9a9a;border-top:none;border-radius:0 0 2px 2px;box-shadow:1px 1px 0 #c8c8c8"></div><svg class="abs" style="left:543.5px;top:592.5px" width="11" height="10" viewBox="0 0 11 10"><rect x="0.3" y="0.5" width="3" height="9" rx="1.2" fill="#2a2ad8"/><rect x="3.8" y="0.5" width="3.2" height="9" rx="1.2" fill="#e02020"/><rect x="7.5" y="0.5" width="3.2" height="9" rx="1.2" fill="#f0a020"/></svg><div class="tab" style="left:555.7px;top:591.2px">Results</div>
<div class="abs" style="left:745.5px;top:588px;width:47.5px;height:17.5px;background:#fbfbfb;border:1px solid #9a9a9a;border-top:none;border-radius:0 0 2px 2px;box-shadow:1px 1px 0 #c8c8c8"></div><svg class="abs" style="left:747.5px;top:592.5px" width="11" height="10" viewBox="0 0 11 10"><path d="M1.5 1.5L9 9M9.5 1.5L2 9" stroke="#777" stroke-width="1.4"/><path d="M0.8 2.2L2.5 0.8L4 2.2L2.5 3.8z" fill="#999"/><path d="M8 0.8h2.4v2.4z" fill="#555"/></svg><div class="tab" style="left:759.5px;top:591.2px">Edit Bar</div>
<div class="abs" style="left:793px;top:589.5px;width:45px;height:15.5px;background:#f1f1f1;border:1px solid #a6a6a6;border-radius:0 0 2.5px 2.5px"></div><svg class="abs" style="left:795px;top:592.5px" width="11" height="11" viewBox="0 0 11 11"><path d="M4 1.5h6.5v6.5h-2" fill="none" stroke="#555" stroke-width="0.7"/><path d="M0.5 4l2-2h3.5v6l-2 2h-3.5z" fill="#2a4ad8"/><path d="M4 4l2-2l1.8 0v6l-2 2h-1.8z" fill="#e02828"/></svg><div class="tab" style="left:807px;top:591.2px">Clipper</div>
<div class="abs" style="left:1px;top:606px;width:898px;height:15px;background:#f0f0f0;border-top:1px solid #e2e2e2"></div>
<div class="abs" style="left:583px;top:608px;width:1px;height:12px;background:#dcdcdc"></div>
<div class="abs" style="left:771px;top:608px;width:1px;height:12px;background:#dcdcdc"></div>
<div class="abs" style="left:832.5px;top:608px;width:1px;height:12px;background:#dcdcdc"></div>
<div class="abs" style="left:897px;top:608px;width:1px;height:12px;background:#dcdcdc"></div>
<div class="t" style="left:3px;top:608.3px;font-size:8.5px">For Help, press F1</div>
<div class="abs" style="left:0;top:23px;width:1px;height:599px;background:#0078d7"></div>
<div class="abs" style="left:899px;top:23px;width:1px;height:599px;background:#0078d7"></div>
<div class="abs" style="left:0;top:621px;width:900px;height:1px;background:#0078d7"></div>
</body></html>
